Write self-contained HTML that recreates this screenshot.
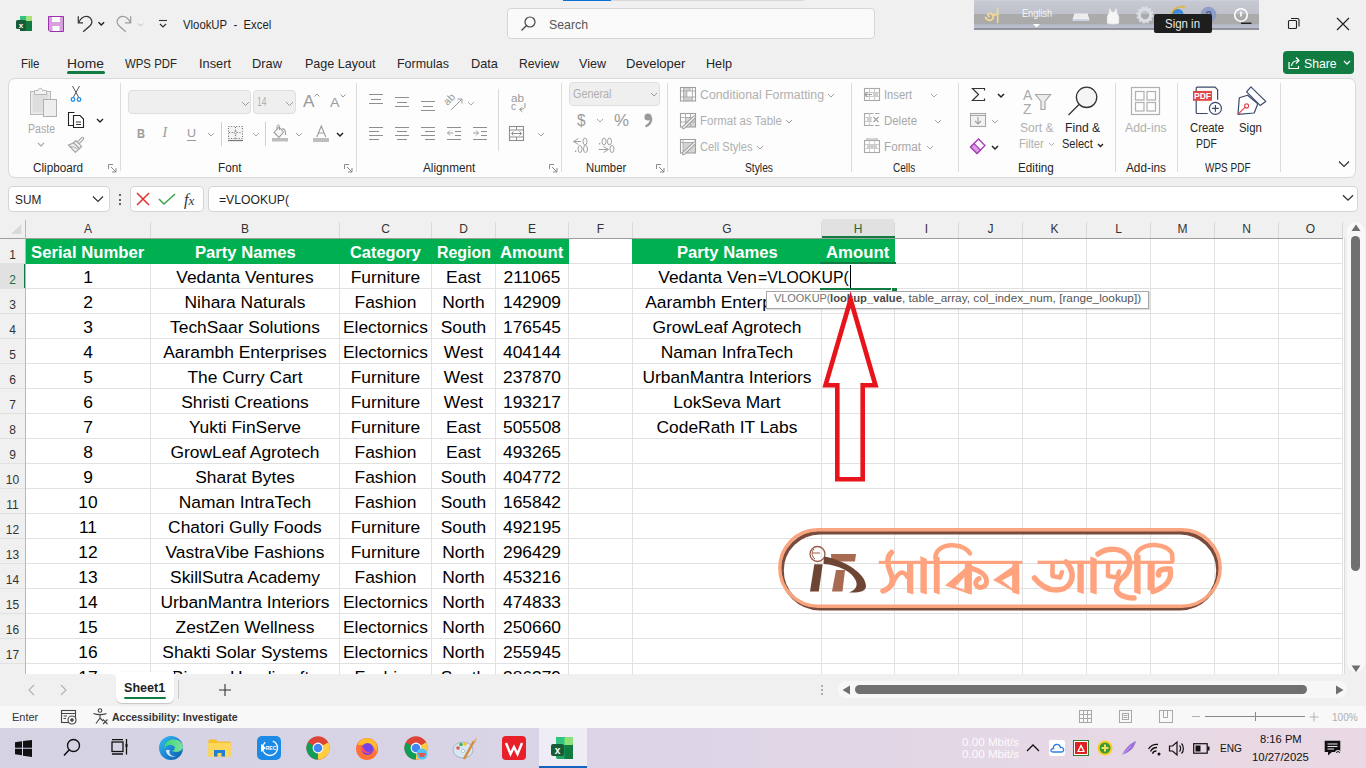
<!DOCTYPE html>
<html><head><meta charset="utf-8"><style>
html,body{margin:0;padding:0;}
body{width:1366px;height:768px;overflow:hidden;position:relative;background:#f0f0f0;font-family:"Liberation Sans",sans-serif;}
.t{position:absolute;white-space:nowrap;}
.r{position:absolute;}
.s{position:absolute;overflow:visible;}
</style></head><body>
<svg class="s" style="left:16px;top:15px;" width="16" height="17" viewBox="0 0 16 17">
<rect x="4" y="1" width="12" height="15" rx="1.5" fill="#21a366"/>
<rect x="4" y="1" width="6" height="5" fill="#33c481"/><rect x="10" y="1" width="6" height="5" rx="1" fill="#a8e37a"/>
<rect x="10" y="6" width="6" height="10" fill="#107c41"/><rect x="4" y="6" width="6" height="10" fill="#185c37"/>
<rect x="0" y="5" width="10" height="9" rx="1.5" fill="#185c37"/>
<text x="5" y="12.5" font-size="8" font-weight="bold" fill="#fff" text-anchor="middle" font-family="Liberation Sans">x</text></svg>
<svg class="s" style="left:48px;top:16px;" width="16" height="16" viewBox="0 0 16 16">
<path d="M0.5 0.5 H15.5 V15.5 H2 L0.5 14 Z" fill="#d9a0e0" stroke="#9b2fae" stroke-width="1"/>
<rect x="4" y="1" width="8" height="5" fill="#fff"/><rect x="4.5" y="10" width="7" height="5" fill="#fff"/></svg>
<svg class="s" style="left:77px;top:15px;" width="30" height="18" viewBox="0 0 30 18">
<path d="M1.3 1.2 V7.8 H6" fill="none" stroke="#333" stroke-width="1.2"/>
<path d="M1.6 7.6 C4 2.5 7 1.3 9.6 1.4 C13 1.5 15 4.5 14.9 7.2 C14.8 8.5 14 9.6 13.3 10.5 L6.2 16.8" fill="none" stroke="#333" stroke-width="1.25"/>
<path d="M21.5 7.2 L24.3 10 L27.1 7.2" fill="none" stroke="#222" stroke-width="1.4"/></svg>
<svg class="s" style="left:116px;top:15px;" width="30" height="18" viewBox="0 0 30 18">
<path d="M14.7 1.2 V7.8 H9" fill="none" stroke="#9a9a9a" stroke-width="1.2"/>
<path d="M14.4 7.6 C12 2.5 9 1.3 6.4 1.4 C3 1.5 1 4.5 1.1 7.2 C1.2 8.5 2 9.6 2.7 10.5 L9.8 16.8" fill="none" stroke="#9a9a9a" stroke-width="1.2"/>
<path d="M22 8.5 L24.5 11 L27 8.5" fill="none" stroke="#b8b8b8" stroke-width="1"/></svg>
<svg class="s" style="left:158px;top:19px;" width="10" height="10" viewBox="0 0 10 10"><path d="M1 1.5 H9" stroke="#333" stroke-width="1.1"/><path d="M2 5 L5 8 L8 5" fill="none" stroke="#333" stroke-width="1.2"/></svg>
<div class="t" style="left:183.00px;top:17px;font-size:12.5px;line-height:16px;color:#1f1f1f;transform:scaleX(0.9069);transform-origin:0 0;">VlookUP&nbsp; -&nbsp; Excel</div>
<div class="r" style="left:507px;top:8px;width:368px;height:31px;background:#fafafa;border:1px solid #d6d6d6;border-radius:4px;box-sizing:border-box;"></div>
<svg class="s" style="left:520px;top:16px;" width="16" height="16" viewBox="0 0 16 16"><circle cx="10" cy="6" r="5" fill="none" stroke="#444" stroke-width="1.2"/><path d="M6.5 9.5 L1.5 14.5" stroke="#444" stroke-width="1.3"/></svg>
<div class="t" style="left:549.00px;top:17px;font-size:13px;line-height:16px;color:#555;transform:scaleX(0.9468);transform-origin:0 0;">Search</div>
<div class="r" style="left:563px;top:0px;width:48px;height:1px;background:#0a70d6;"></div>
<div class="r" style="left:611px;top:0px;width:193px;height:1px;background:#d8d8d8;"></div>
<div class="r" style="left:974px;top:0px;width:285px;height:30px;background:linear-gradient(#d4d6dc 0%,#c6c9d1 4%,#bfc2ca 46%,#ababab 48%,#aaaaaa 80%,#b6b9c8 82%,#bcc0d0 93%,#8e9098 95%,#9a9ca4 100%);"></div>
<svg class="s" style="left:984px;top:7px;" width="16" height="17" viewBox="0 0 16 17"><path d="M1.5 10.5 C3 13.5 6 14 8 12.5 C10.5 10.5 9 6 5.5 6.5 C3.5 7 3.5 9 5 9.5" fill="none" stroke="#f2d894" stroke-width="1.8" stroke-linecap="round"/><path d="M8.5 8.5 C10 8 11.5 8 13 7 M13.5 1 C14 6 14 11 13.5 15.5" fill="none" stroke="#f2d894" stroke-width="1.6" stroke-linecap="round"/></svg>
<div class="t" style="left:1022.00px;top:6px;font-size:10.8px;line-height:14px;color:#f6f6f6;transform:scaleX(0.8469);transform-origin:0 0;">English</div>
<svg class="s" style="left:1033px;top:24px;" width="7" height="4" viewBox="0 0 7 4"><path d="M0 0 H7 L3.5 3.5Z" fill="#fff"/></svg>
<svg class="s" style="left:1072px;top:13px;" width="18" height="9" viewBox="0 0 18 9"><path d="M2.5 0.5 H15.5 L17.5 6.5 H0.5 Z" fill="#f2f2f2"/><path d="M3 2 H15 M2.5 4 H15.5" stroke="#cfcfcf" stroke-width="0.7" stroke-dasharray="1 1"/><rect x="0.5" y="6.5" width="17" height="1.5" fill="#c8d4e8"/></svg>
<svg class="s" style="left:1106px;top:8px;" width="14" height="17" viewBox="0 0 14 17"><path d="M3 0.5 V4 C3 6 1 7 1 9 V15.5 C4 16.5 10 16.5 13 15.5 V9 C13 7 11 6 11 4 V0.5 L9.5 0.5 C9.5 3 8 4 7 4 C6 4 4.5 3 4.5 0.5Z" fill="#f6f6f6" stroke="#d0d0d0" stroke-width="0.6"/></svg>
<svg class="s" style="left:1136px;top:6px;" width="18" height="18" viewBox="0 0 18 18"><circle cx="9" cy="9" r="5.8" fill="none" stroke="#d9dde4" stroke-width="3.2"/><circle cx="9" cy="9" r="7.6" fill="none" stroke="#d9dde4" stroke-width="2.2" stroke-dasharray="2.2 1.8"/></svg>
<svg class="s" style="left:1169px;top:5px;" width="18" height="18" viewBox="0 0 18 18"><path d="M3 13 C0 6 8 0 16 2 C10 0 3 4 4 11" fill="none" stroke="#e0b640" stroke-width="1.5"/><circle cx="9" cy="9.5" r="5.5" fill="#3d86d6"/><path d="M5.5 9.5 H12.5 M12 11.5 C11 13.5 7 14 6 11" fill="none" stroke="#cfe4f8" stroke-width="1.3"/></svg>
<svg class="s" style="left:1200px;top:6px;" width="17" height="17" viewBox="0 0 17 17"><circle cx="8.5" cy="8.5" r="7.8" fill="#8796c8" opacity="0.85"/><text x="8.5" y="13" font-size="11" font-weight="bold" fill="#4d5a86" text-anchor="middle" font-family="Liberation Sans">?</text></svg>
<svg class="s" style="left:1233px;top:7px;" width="20" height="18" viewBox="0 0 20 18"><circle cx="8" cy="8" r="6.3" fill="none" stroke="#fff" stroke-width="1.6"/><rect x="7.2" y="4.5" width="1.6" height="5" fill="#fff"/><rect x="8" y="15.6" width="10.5" height="1.3" fill="#111"/></svg>
<div class="r" style="left:1154px;top:14px;width:58px;height:19px;background:#1e1e1e;border-radius:2px;"></div>
<div class="t" style="left:1165.40px;top:17px;font-size:12px;line-height:15px;color:#e8e8e8;transform:scaleX(0.9539);transform-origin:0 0;">Sign in</div>
<svg class="s" style="left:1287px;top:17px;" width="14" height="14" viewBox="0 0 14 14"><rect x="1.5" y="3.5" width="8" height="8" rx="1" fill="none" stroke="#222" stroke-width="1.1"/><path d="M4 1.5 H10.5 A1.5 1.5 0 0 1 12 3 V9.5" fill="none" stroke="#222" stroke-width="1.1"/></svg>
<svg class="s" style="left:1336px;top:17px;" width="14" height="14" viewBox="0 0 14 14"><path d="M1 1 L13 13 M13 1 L1 13" stroke="#222" stroke-width="1.2"/></svg>
<div class="t" style="left:21.00px;top:56px;font-size:13.2px;line-height:16px;color:#262626;transform:scaleX(0.8697);transform-origin:0 0;">File</div>
<div class="t" style="left:67.00px;top:56px;font-size:13.2px;line-height:16px;color:#262626;transform:scaleX(1.0508);transform-origin:0 0;">Home</div>
<div class="t" style="left:125.00px;top:56px;font-size:13.2px;line-height:16px;color:#262626;transform:scaleX(0.8647);transform-origin:0 0;">WPS PDF</div>
<div class="t" style="left:199.00px;top:56px;font-size:13.2px;line-height:16px;color:#262626;transform:scaleX(0.9693);transform-origin:0 0;">Insert</div>
<div class="t" style="left:252.00px;top:56px;font-size:13.2px;line-height:16px;color:#262626;transform:scaleX(0.9739);transform-origin:0 0;">Draw</div>
<div class="t" style="left:304.50px;top:56px;font-size:13.2px;line-height:16px;color:#262626;transform:scaleX(0.9510);transform-origin:0 0;">Page Layout</div>
<div class="t" style="left:397.00px;top:56px;font-size:13.2px;line-height:16px;color:#262626;transform:scaleX(0.9452);transform-origin:0 0;">Formulas</div>
<div class="t" style="left:471.00px;top:56px;font-size:13.2px;line-height:16px;color:#262626;transform:scaleX(0.9683);transform-origin:0 0;">Data</div>
<div class="t" style="left:519.00px;top:56px;font-size:13.2px;line-height:16px;color:#262626;transform:scaleX(0.9242);transform-origin:0 0;">Review</div>
<div class="t" style="left:579.00px;top:56px;font-size:13.2px;line-height:16px;color:#262626;transform:scaleX(0.9516);transform-origin:0 0;">View</div>
<div class="t" style="left:626.00px;top:56px;font-size:13.2px;line-height:16px;color:#262626;transform:scaleX(0.9889);transform-origin:0 0;">Developer</div>
<div class="t" style="left:706.00px;top:56px;font-size:13.2px;line-height:16px;color:#262626;transform:scaleX(0.9577);transform-origin:0 0;">Help</div>
<div class="r" style="left:67px;top:71px;width:38px;height:3px;background:#107c41;border-radius:1.5px;"></div>
<div class="r" style="left:1283px;top:51px;width:71px;height:23px;background:#107c41;border-radius:4px;"></div>
<svg class="s" style="left:1286px;top:55px;" width="16" height="16" viewBox="0 0 16 16"><path d="M3 7 V13.5 H12.5 V11" fill="none" stroke="#fff" stroke-width="1.2"/><path d="M5.5 11 C6 7 8.5 5.5 12.5 5.5 M10 2.5 L13 5.5 L10 8.5" fill="none" stroke="#fff" stroke-width="1.2"/></svg>
<div class="t" style="left:1304.00px;top:56px;font-size:13.2px;line-height:16px;color:#fff;transform:scaleX(0.9283);transform-origin:0 0;">Share</div>
<svg class="s" style="left:1342.5px;top:60px;" width="8" height="6" viewBox="0 0 8 6"><path d="M1 1 L4 4 L7 1" fill="none" stroke="#fff" stroke-width="1.3"/></svg>
<div class="r" style="left:8px;top:78px;width:1348px;height:100px;background:#fdfdfd;border:1px solid #d9d9d9;border-radius:7px;box-sizing:border-box;"></div>
<div class="t" style="left:32.50px;top:161px;font-size:12px;line-height:15px;color:#262626;transform:scaleX(0.9754);transform-origin:0 0;">Clipboard</div>
<div class="t" style="left:217.50px;top:161px;font-size:12px;line-height:15px;color:#262626;transform:scaleX(0.9787);transform-origin:0 0;">Font</div>
<div class="t" style="left:423.40px;top:161px;font-size:12px;line-height:15px;color:#262626;transform:scaleX(0.9801);transform-origin:0 0;">Alignment</div>
<div class="t" style="left:585.60px;top:161px;font-size:12px;line-height:15px;color:#262626;transform:scaleX(0.9419);transform-origin:0 0;">Number</div>
<div class="t" style="left:745.00px;top:161px;font-size:12px;line-height:15px;color:#262626;transform:scaleX(0.8568);transform-origin:0 0;">Styles</div>
<div class="t" style="left:892.70px;top:161px;font-size:12px;line-height:15px;color:#262626;transform:scaleX(0.8361);transform-origin:0 0;">Cells</div>
<div class="t" style="left:1017.60px;top:161px;font-size:12px;line-height:15px;color:#262626;transform:scaleX(0.9757);transform-origin:0 0;">Editing</div>
<div class="t" style="left:1125.80px;top:161px;font-size:12px;line-height:15px;color:#262626;transform:scaleX(0.9831);transform-origin:0 0;">Add-ins</div>
<div class="t" style="left:1205.00px;top:161px;font-size:12px;line-height:15px;color:#262626;transform:scaleX(0.8323);transform-origin:0 0;">WPS PDF</div>
<div class="r" style="left:119.5px;top:83px;width:1px;height:88px;background:#dcdcdc;"></div>
<div class="r" style="left:355.5px;top:83px;width:1px;height:89px;background:#dcdcdc;"></div>
<div class="r" style="left:560.5px;top:83px;width:1px;height:89px;background:#dcdcdc;"></div>
<div class="r" style="left:667.3px;top:83px;width:1px;height:89px;background:#dcdcdc;"></div>
<div class="r" style="left:851px;top:83px;width:1px;height:89px;background:#dcdcdc;"></div>
<div class="r" style="left:957.7px;top:83px;width:1px;height:89px;background:#dcdcdc;"></div>
<div class="r" style="left:1114.5px;top:83px;width:1px;height:89px;background:#dcdcdc;"></div>
<div class="r" style="left:1177px;top:83px;width:1px;height:89px;background:#dcdcdc;"></div>
<div class="r" style="left:1279.5px;top:83px;width:1px;height:89px;background:#dcdcdc;"></div>
<svg class="s" style="left:108px;top:164px;" width="9" height="9" viewBox="0 0 9 9"><path d="M0.5 0.5 H5 M0.5 0.5 V5 M3 3 L8 8 M8 4 V8 H4" fill="none" stroke="#8a8a8a" stroke-width="1"/></svg>
<svg class="s" style="left:344px;top:164px;" width="9" height="9" viewBox="0 0 9 9"><path d="M0.5 0.5 H5 M0.5 0.5 V5 M3 3 L8 8 M8 4 V8 H4" fill="none" stroke="#8a8a8a" stroke-width="1"/></svg>
<svg class="s" style="left:549px;top:164px;" width="9" height="9" viewBox="0 0 9 9"><path d="M0.5 0.5 H5 M0.5 0.5 V5 M3 3 L8 8 M8 4 V8 H4" fill="none" stroke="#8a8a8a" stroke-width="1"/></svg>
<svg class="s" style="left:656px;top:164px;" width="9" height="9" viewBox="0 0 9 9"><path d="M0.5 0.5 H5 M0.5 0.5 V5 M3 3 L8 8 M8 4 V8 H4" fill="none" stroke="#8a8a8a" stroke-width="1"/></svg>
<svg class="s" style="left:29px;top:86px;" width="30" height="32" viewBox="0 0 30 32">
<rect x="1.5" y="5.5" width="20" height="23" fill="#ececec" stroke="#b8b8b8" stroke-width="1"/>
<rect x="3.5" y="7.5" width="16" height="19" fill="#dedede"/>
<path d="M5.5 8.5 V4.5 H9 C9 1.5 13.5 1.5 13.5 4.5 H17.5 V8.5 Z" fill="#f2f2f2" stroke="#b8b8b8" stroke-width="1"/>
<rect x="14.5" y="13.5" width="13" height="17" fill="#eeeeee" stroke="#b0b0b0" stroke-width="1"/></svg>
<div class="t" style="left:27.80px;top:122px;font-size:12px;line-height:15px;color:#a8a8a8;transform:scaleX(0.8799);transform-origin:0 0;">Paste</div>
<svg class="s" style="left:37px;top:142px;" width="8" height="5.0" viewBox="0 0 8 5.0"><path d="M1 1 L4.0 4.0 L7 1" fill="none" stroke="#a8a8a8" stroke-width="1.1"/></svg>
<svg class="s" style="left:70px;top:85px;" width="12" height="18" viewBox="0 0 12 18">
<path d="M2.5 1 L8.5 12 M9.5 1 L3.5 12" stroke="#555" stroke-width="1"/>
<circle cx="3" cy="14.5" r="1.8" fill="none" stroke="#1e8fe0" stroke-width="1.3"/>
<circle cx="9" cy="14.5" r="1.8" fill="none" stroke="#1e8fe0" stroke-width="1.3"/></svg>
<svg class="s" style="left:67px;top:111px;" width="18" height="18" viewBox="0 0 18 18">
<path d="M7.5 1.5 H1.5 V14.5 H6" fill="none" stroke="#222" stroke-width="1.1"/>
<path d="M6.5 4.5 H13 L16.5 8 V16.5 H6.5 Z" fill="#fff" stroke="#222" stroke-width="1.1"/>
<path d="M9 11 H14 M9 13.5 H14" stroke="#333" stroke-width="1"/></svg>
<svg class="s" style="left:95.5px;top:118px;" width="8" height="5.0" viewBox="0 0 8 5.0"><path d="M1 1 L4.0 4.0 L7 1" fill="none" stroke="#222" stroke-width="1.4"/></svg>
<svg class="s" style="left:67px;top:136px;" width="18" height="18" viewBox="0 0 18 18">
<path d="M15.5 2.5 L11.5 6.5" stroke="#a0a0a0" stroke-width="3.4" stroke-linecap="round"/>
<path d="M15.5 2.5 L11.5 6.5" stroke="#fafafa" stroke-width="1.2" stroke-linecap="round"/>
<path d="M8.8 4.6 L14.6 10.4 L12.4 12.6 L6.6 6.8 Z" fill="#f4f4f4" stroke="#a0a0a0" stroke-width="1.1"/>
<path d="M6.6 6.8 C4.5 8 2.5 8.5 1.3 8.9 L8.3 16.3 L12.4 12.6 Z" fill="#ededed" stroke="#a0a0a0" stroke-width="1.1" stroke-linejoin="round"/>
<path d="M3 10.5 C6 10.5 9 11.5 11 13.5" fill="none" stroke="#a8a8a8" stroke-width="0.9"/></svg>
<div class="r" style="left:128px;top:90px;width:123px;height:24px;background:#efefef;border:1px solid #dfdfdf;border-radius:4px;box-sizing:border-box;"></div>
<svg class="s" style="left:240.5px;top:101px;" width="9" height="5.5" viewBox="0 0 9 5.5"><path d="M1 1 L4.5 4.5 L8 1" fill="none" stroke="#9a9a9a" stroke-width="1"/></svg>
<div class="r" style="left:253px;top:90px;width:43px;height:24px;background:#efefef;border:1px solid #dfdfdf;border-radius:4px;box-sizing:border-box;"></div>
<div class="t" style="left:256.70px;top:94px;font-size:12.5px;line-height:16px;color:#b0b0b0;transform:scaleX(0.6832);transform-origin:0 0;">14</div>
<svg class="s" style="left:284.5px;top:101px;" width="9" height="5.5" viewBox="0 0 9 5.5"><path d="M1 1 L4.5 4.5 L8 1" fill="none" stroke="#9a9a9a" stroke-width="1"/></svg>
<div class="t" style="left:302.50px;top:91px;font-size:16.5px;line-height:21px;color:#9a9a9a;transform:scaleX(1.0449);transform-origin:0 0;">A</div>
<svg class="s" style="left:314px;top:93px;" width="6" height="4" viewBox="0 0 6 4"><path d="M0.5 3.5 L3 1 L5.5 3.5" fill="none" stroke="#9a9a9a" stroke-width="1"/></svg>
<div class="t" style="left:330.00px;top:94px;font-size:13.5px;line-height:17px;color:#9a9a9a;transform:scaleX(1.0550);transform-origin:0 0;">A</div>
<svg class="s" style="left:339.5px;top:94px;" width="6" height="4" viewBox="0 0 6 4"><path d="M0.5 0.5 L3 3 L5.5 0.5" fill="none" stroke="#9a9a9a" stroke-width="1"/></svg>
<div class="t" style="left:136.50px;top:126px;font-size:13px;line-height:16px;color:#9a9a9a;font-weight:bold;transform:scaleX(0.8521);transform-origin:0 0;">B</div>
<div class="t" style="left:162.50px;top:124px;font-size:14px;line-height:18px;color:#9a9a9a;font-family:&quot;Liberation Serif&quot;,serif;font-style:italic;">I</div>
<div class="t" style="left:187.00px;top:126px;font-size:11.6px;line-height:14px;color:#9a9a9a;transform:scaleX(1.0743);transform-origin:0 0;">U</div>
<div class="r" style="left:187px;top:139.5px;width:9px;height:1px;background:#9a9a9a;"></div>
<svg class="s" style="left:206.5px;top:132px;" width="8" height="5.0" viewBox="0 0 8 5.0"><path d="M1 1 L4.0 4.0 L7 1" fill="none" stroke="#a8a8a8" stroke-width="1"/></svg>
<div class="r" style="left:221px;top:122px;width:1px;height:24px;background:#d0d0d0;"></div>
<svg class="s" style="left:227px;top:125px;" width="17" height="18" viewBox="0 0 17 18">
<rect x="1.5" y="1.5" width="14" height="12" fill="#f4f4f4" stroke="#7a7a7a" stroke-width="1.1" stroke-dasharray="1.1 1.5"/>
<path d="M8.5 2 V13.5 M2 7.5 H15" stroke="#7a7a7a" stroke-width="1.1" stroke-dasharray="1.1 1.5"/>
<path d="M8.5 6 L10 7.5 L8.5 9 L7 7.5Z" fill="#fff" stroke="#7a7a7a" stroke-width="0.8"/>
<path d="M1 15.5 H16" stroke="#7a7a7a" stroke-width="1.3"/></svg>
<svg class="s" style="left:251.5px;top:132px;" width="8" height="5.0" viewBox="0 0 8 5.0"><path d="M1 1 L4.0 4.0 L7 1" fill="none" stroke="#a8a8a8" stroke-width="1"/></svg>
<div class="r" style="left:265px;top:122px;width:1px;height:24px;background:#d0d0d0;"></div>
<svg class="s" style="left:271px;top:124px;" width="18" height="19" viewBox="0 0 18 19">
<path d="M3 8.5 L8 3 L12.5 8 L8 13.5 Z" fill="#f6f6f6" stroke="#9a9a9a" stroke-width="1.1"/>
<path d="M6 5.5 V2.5 C6 0.5 8.5 0.5 8.5 2.5 V6" fill="none" stroke="#9a9a9a" stroke-width="1"/>
<path d="M11 5 C13 4.5 14.5 6 14.5 8.5 V11" fill="none" stroke="#9a9a9a" stroke-width="1.1"/>
<rect x="1" y="14" width="16" height="3.5" fill="#bdbdbd"/></svg>
<svg class="s" style="left:295px;top:132px;" width="8" height="5.0" viewBox="0 0 8 5.0"><path d="M1 1 L4.0 4.0 L7 1" fill="none" stroke="#a8a8a8" stroke-width="1"/></svg>
<svg class="s" style="left:313px;top:125px;" width="16" height="13" viewBox="0 0 16 13"><path d="M3.8 12 L8.3 1 L12.8 12 M5.4 8 H11.2" fill="none" stroke="#9a9a9a" stroke-width="1.1"/></svg>
<div class="r" style="left:313px;top:138px;width:16px;height:3.5px;background:#bdbdbd;"></div>
<svg class="s" style="left:336px;top:132px;" width="8" height="5.0" viewBox="0 0 8 5.0"><path d="M1 1 L4.0 4.0 L7 1" fill="none" stroke="#222" stroke-width="1.5"/></svg>
<div class="r" style="left:369px;top:94px;width:14px;height:1.2px;background:#8f8f8f;"></div>
<div class="r" style="left:371px;top:98.5px;width:10px;height:1.2px;background:#8f8f8f;"></div>
<div class="r" style="left:369px;top:103px;width:14px;height:1.2px;background:#8f8f8f;"></div>
<div class="r" style="left:395px;top:97px;width:14px;height:1.2px;background:#8f8f8f;"></div>
<div class="r" style="left:397px;top:101.5px;width:10px;height:1.2px;background:#8f8f8f;"></div>
<div class="r" style="left:395px;top:106px;width:14px;height:1.2px;background:#8f8f8f;"></div>
<div class="r" style="left:421px;top:101px;width:14px;height:1.2px;background:#8f8f8f;"></div>
<div class="r" style="left:423px;top:105.5px;width:10px;height:1.2px;background:#8f8f8f;"></div>
<div class="r" style="left:421px;top:110px;width:14px;height:1.2px;background:#8f8f8f;"></div>
<svg class="s" style="left:445px;top:92px;" width="28" height="18" viewBox="0 0 28 18">
<text x="0" y="0" font-size="10.5" fill="#9a9a9a" font-family="Liberation Sans" transform="translate(2.5,14) rotate(-45)">ab</text>
<path d="M6 18 L16.5 7.5 M12.5 7 H17 V11.5" fill="none" stroke="#999" stroke-width="1"/></svg>
<svg class="s" style="left:467px;top:101px;" width="8" height="5.0" viewBox="0 0 8 5.0"><path d="M1 1 L4.0 4.0 L7 1" fill="none" stroke="#a8a8a8" stroke-width="1"/></svg>
<div class="r" style="left:498px;top:89px;width:1px;height:62px;background:#d9d9d9;"></div>
<div class="t" style="left:511.00px;top:93px;font-size:10px;line-height:12px;color:#9a9a9a;transform:scaleX(1.1687);transform-origin:0 0;">ab</div>
<div class="t" style="left:511.00px;top:101px;font-size:10px;line-height:12px;color:#9a9a9a;">c</div>
<svg class="s" style="left:516px;top:102px;" width="12" height="10" viewBox="0 0 12 10"><path d="M9 1 V4 C9 6.5 7 7.5 4 7.5 M6.5 5 L3.5 7.5 L6.5 10" fill="none" stroke="#9a9a9a" stroke-width="1"/></svg>
<div class="r" style="left:369px;top:127px;width:14px;height:1.2px;background:#8f8f8f;"></div>
<div class="r" style="left:369px;top:131px;width:10px;height:1.2px;background:#8f8f8f;"></div>
<div class="r" style="left:369px;top:135px;width:14px;height:1.2px;background:#8f8f8f;"></div>
<div class="r" style="left:369px;top:139px;width:10px;height:1.2px;background:#8f8f8f;"></div>
<div class="r" style="left:395px;top:127px;width:14px;height:1.2px;background:#8f8f8f;"></div>
<div class="r" style="left:397px;top:131px;width:10px;height:1.2px;background:#8f8f8f;"></div>
<div class="r" style="left:395px;top:135px;width:14px;height:1.2px;background:#8f8f8f;"></div>
<div class="r" style="left:397px;top:139px;width:10px;height:1.2px;background:#8f8f8f;"></div>
<div class="r" style="left:421px;top:127px;width:14px;height:1.2px;background:#8f8f8f;"></div>
<div class="r" style="left:425px;top:131px;width:10px;height:1.2px;background:#8f8f8f;"></div>
<div class="r" style="left:421px;top:135px;width:14px;height:1.2px;background:#8f8f8f;"></div>
<div class="r" style="left:425px;top:139px;width:10px;height:1.2px;background:#8f8f8f;"></div>
<div class="r" style="left:447px;top:127px;width:14px;height:1.2px;background:#8f8f8f;"></div>
<div class="r" style="left:455px;top:131px;width:6px;height:1.2px;background:#8f8f8f;"></div>
<div class="r" style="left:455px;top:135px;width:6px;height:1.2px;background:#8f8f8f;"></div>
<div class="r" style="left:447px;top:139px;width:14px;height:1.2px;background:#8f8f8f;"></div>
<svg class="s" style="left:446px;top:129px;" width="8" height="8" viewBox="0 0 8 8"><path d="M7 4 H1.5 M4 1.5 L1.5 4 L4 6.5" fill="none" stroke="#a0a0a0" stroke-width="1"/></svg>
<div class="r" style="left:473px;top:127px;width:14px;height:1.2px;background:#8f8f8f;"></div>
<div class="r" style="left:481px;top:131px;width:6px;height:1.2px;background:#8f8f8f;"></div>
<div class="r" style="left:481px;top:135px;width:6px;height:1.2px;background:#8f8f8f;"></div>
<div class="r" style="left:473px;top:139px;width:14px;height:1.2px;background:#8f8f8f;"></div>
<svg class="s" style="left:472px;top:129px;" width="8" height="8" viewBox="0 0 8 8"><path d="M1 4 H6.5 M4 1.5 L6.5 4 L4 6.5" fill="none" stroke="#a0a0a0" stroke-width="1"/></svg>
<svg class="s" style="left:508px;top:125px;" width="17" height="17" viewBox="0 0 17 17">
<rect x="1.5" y="1.5" width="14" height="14" fill="none" stroke="#8f8f8f" stroke-width="1.1"/>
<path d="M1.5 5 H15.5 M1.5 12 H15.5 M8.5 1.5 V5 M8.5 12 V15.5" stroke="#8f8f8f" stroke-width="1"/>
<path d="M3.5 8.5 H13.5 M5.5 6.5 L3.5 8.5 L5.5 10.5 M11.5 6.5 L13.5 8.5 L11.5 10.5" fill="none" stroke="#8f8f8f" stroke-width="1"/></svg>
<svg class="s" style="left:537px;top:132px;" width="8" height="5.0" viewBox="0 0 8 5.0"><path d="M1 1 L4.0 4.0 L7 1" fill="none" stroke="#a8a8a8" stroke-width="1"/></svg>
<div class="r" style="left:569px;top:82px;width:91px;height:24px;background:#efefef;border:1px solid #dfdfdf;border-radius:4px;box-sizing:border-box;"></div>
<div class="t" style="left:572.70px;top:87px;font-size:12px;line-height:15px;color:#b0b0b0;transform:scaleX(0.9018);transform-origin:0 0;">General</div>
<svg class="s" style="left:650px;top:92px;" width="8" height="5.0" viewBox="0 0 8 5.0"><path d="M1 1 L4.0 4.0 L7 1" fill="none" stroke="#9a9a9a" stroke-width="1"/></svg>
<div class="t" style="left:576.50px;top:111px;font-size:16px;line-height:20px;color:#9a9a9a;transform:scaleX(0.9552);transform-origin:0 0;">$</div>
<svg class="s" style="left:596px;top:117.5px;" width="8" height="5.0" viewBox="0 0 8 5.0"><path d="M1 1 L4.0 4.0 L7 1" fill="none" stroke="#a8a8a8" stroke-width="1"/></svg>
<div class="t" style="left:614.00px;top:111px;font-size:16px;line-height:20px;color:#9a9a9a;transform:scaleX(1.0544);transform-origin:0 0;">%</div>
<svg class="s" style="left:643px;top:112px;" width="10" height="16" viewBox="0 0 10 16"><circle cx="5" cy="5" r="3.6" fill="#9a9a9a"/><path d="M8.2 5.5 C8.5 10 6 13 2.5 14.5" fill="none" stroke="#9a9a9a" stroke-width="2.2"/></svg>
<svg class="s" style="left:572px;top:136px;" width="44" height="19" viewBox="0 0 44 19">
<path d="M6.5 2.5 L1.5 5.5 L6.5 8.5 M1.5 5.5 H9" fill="none" stroke="#a0a0a0" stroke-width="1"/>
<ellipse cx="13" cy="5.5" rx="2" ry="3.5" fill="none" stroke="#a0a0a0" stroke-width="1"/>
<rect x="3" y="14.5" width="1.3" height="1.5" fill="#a0a0a0"/><ellipse cx="8" cy="13" rx="2" ry="3.5" fill="none" stroke="#a0a0a0" stroke-width="1"/><ellipse cx="13.5" cy="13" rx="2" ry="3.5" fill="none" stroke="#a0a0a0" stroke-width="1"/>
<rect x="27" y="7" width="1.3" height="1.5" fill="#a0a0a0"/><ellipse cx="32" cy="5.5" rx="2" ry="3.5" fill="none" stroke="#a0a0a0" stroke-width="1"/><ellipse cx="37.5" cy="5.5" rx="2" ry="3.5" fill="none" stroke="#a0a0a0" stroke-width="1"/>
<path d="M31.5 10.5 L36.5 13.5 L31.5 16.5 M26.5 13.5 H36" fill="none" stroke="#a0a0a0" stroke-width="1"/>
<ellipse cx="40" cy="13" rx="2" ry="3.5" fill="none" stroke="#a0a0a0" stroke-width="1"/></svg>
<svg class="s" style="left:679px;top:86px;" width="18" height="17" viewBox="0 0 18 17"><rect x="4.5" y="1.5" width="6.5" height="3.5" fill="#cfcfcf"/><rect x="4.5" y="5" width="3.3" height="6" fill="#cfcfcf"/><rect x="4.5" y="11" width="8.9" height="4" fill="#cfcfcf"/>
<rect x="1.5" y="1.5" width="15" height="13.5" fill="none" stroke="#9f9f9f" stroke-width="1.1"/>
<path d="M1.5 5 H16.5 M1.5 11 H16.5 M4.5 1.5 V15 M13.4 1.5 V15 M7.8 5 V11 M11 1.5 V5" stroke="#a8a8a8" stroke-width="0.9"/></svg>
<div class="t" style="left:700.00px;top:88px;font-size:12px;line-height:15px;color:#b0b0b0;transform:scaleX(1.0271);transform-origin:0 0;">Conditional Formatting</div>
<svg class="s" style="left:827px;top:92.5px;" width="8" height="5.0" viewBox="0 0 8 5.0"><path d="M1 1 L4.0 4.0 L7 1" fill="none" stroke="#a0a0a0" stroke-width="1"/></svg>
<svg class="s" style="left:679px;top:112px;" width="19" height="18" viewBox="0 0 19 18"><rect x="6.5" y="5.5" width="10" height="9.5" fill="#d4d4d4"/>
<rect x="1.5" y="1.5" width="15" height="13.5" fill="none" stroke="#9f9f9f" stroke-width="1.1"/>
<path d="M1.5 5.5 H16.5 M1.5 10 H16.5 M6.5 1.5 V15 M11.5 1.5 V15" stroke="#a8a8a8" stroke-width="0.9"/>
<path d="M4.5 15.5 L15.5 5" stroke="#9f9f9f" stroke-width="3.4" stroke-linecap="round"/><path d="M4.5 15.5 L15.5 5" stroke="#f2f2f2" stroke-width="1.4" stroke-linecap="round"/></svg>
<div class="t" style="left:700.00px;top:114px;font-size:12px;line-height:15px;color:#b0b0b0;transform:scaleX(0.9555);transform-origin:0 0;">Format as Table</div>
<svg class="s" style="left:785px;top:118.5px;" width="8" height="5.0" viewBox="0 0 8 5.0"><path d="M1 1 L4.0 4.0 L7 1" fill="none" stroke="#a0a0a0" stroke-width="1"/></svg>
<svg class="s" style="left:679px;top:138px;" width="19" height="18" viewBox="0 0 19 18"><rect x="4" y="4.5" width="12.5" height="10.5" fill="#d4d4d4"/>
<rect x="1.5" y="1.5" width="15" height="13.5" fill="none" stroke="#9f9f9f" stroke-width="1.1"/>
<path d="M1.5 4.5 H16.5 M4 1.5 V15" stroke="#a8a8a8" stroke-width="0.9"/>
<path d="M4.5 15.5 L15.5 5" stroke="#9f9f9f" stroke-width="3.4" stroke-linecap="round"/><path d="M4.5 15.5 L15.5 5" stroke="#f2f2f2" stroke-width="1.4" stroke-linecap="round"/></svg>
<div class="t" style="left:700.00px;top:140px;font-size:12px;line-height:15px;color:#b0b0b0;transform:scaleX(0.9262);transform-origin:0 0;">Cell Styles</div>
<svg class="s" style="left:756px;top:144.5px;" width="8" height="5.0" viewBox="0 0 8 5.0"><path d="M1 1 L4.0 4.0 L7 1" fill="none" stroke="#a0a0a0" stroke-width="1"/></svg>
<svg class="s" style="left:863px;top:87px;" width="18" height="15" viewBox="0 0 18 15"><rect x="1.5" y="1.5" width="15" height="12" fill="#fff" stroke="#a8a8a8" stroke-width="1.1"/>
<path d="M1.5 5.5 H16.5 M1.5 9.5 H16.5 M6.5 1.5 V13.5 M11.5 1.5 V13.5" stroke="#c4c4c4" stroke-width="0.9"/><rect x="10" y="5" width="5" height="5" fill="#cfcfcf"/>
<path d="M2 7.5 H9 M4.5 5 L2 7.5 L4.5 10" fill="none" stroke="#a0a0a0" stroke-width="1.1"/></svg>
<div class="t" style="left:884.00px;top:88px;font-size:12px;line-height:15px;color:#a8a8a8;transform:scaleX(0.9330);transform-origin:0 0;">Insert</div>
<svg class="s" style="left:930px;top:92.5px;" width="8" height="5.0" viewBox="0 0 8 5.0"><path d="M1 1 L4.0 4.0 L7 1" fill="none" stroke="#a8a8a8" stroke-width="1"/></svg>
<svg class="s" style="left:863px;top:112px;" width="18" height="15" viewBox="0 0 18 15"><path d="M10.5 1.5 H1.5 V13.5 H10.5 M16.5 1.5 H12 M16.5 13.5 H12" fill="none" stroke="#a8a8a8" stroke-width="1.1"/>
<path d="M1.5 5.5 H9 M1.5 9.5 H9 M6.5 1.5 V13.5" stroke="#c4c4c4" stroke-width="0.9"/><rect x="4" y="5" width="4.5" height="5" fill="#cfcfcf"/>
<path d="M10.5 5 L15.5 10 M15.5 5 L10.5 10" stroke="#a0a0a0" stroke-width="1.1"/></svg>
<div class="t" style="left:884.00px;top:114px;font-size:12px;line-height:15px;color:#a8a8a8;transform:scaleX(0.9513);transform-origin:0 0;">Delete</div>
<svg class="s" style="left:934px;top:118.5px;" width="8" height="5.0" viewBox="0 0 8 5.0"><path d="M1 1 L4.0 4.0 L7 1" fill="none" stroke="#a8a8a8" stroke-width="1"/></svg>
<svg class="s" style="left:863px;top:137px;" width="18" height="17" viewBox="0 0 18 17"><rect x="1.5" y="3.5" width="15" height="12" fill="#fff" stroke="#a8a8a8" stroke-width="1.1"/>
<path d="M1.5 7.5 H16.5 M1.5 11.5 H16.5 M6.5 3.5 V15.5 M11.5 3.5 V15.5" stroke="#c4c4c4" stroke-width="0.9"/><rect x="4" y="7.5" width="10" height="4" fill="#cfcfcf"/>
<path d="M4 1 V3 M14 1 V3 M4 2 H14" stroke="#a8a8a8" stroke-width="0.9"/></svg>
<div class="t" style="left:884.00px;top:140px;font-size:12px;line-height:15px;color:#a8a8a8;transform:scaleX(0.9735);transform-origin:0 0;">Format</div>
<svg class="s" style="left:925.5px;top:144.5px;" width="8" height="5.0" viewBox="0 0 8 5.0"><path d="M1 1 L4.0 4.0 L7 1" fill="none" stroke="#a8a8a8" stroke-width="1"/></svg>
<svg class="s" style="left:971px;top:87px;" width="15" height="15" viewBox="0 0 15 15"><path d="M13.5 3.5 V1.5 H1.5 L7.5 7.5 L1.5 13.5 H13.5 V11.5" fill="none" stroke="#333" stroke-width="1.2"/></svg>
<svg class="s" style="left:997px;top:92.5px;" width="8" height="5.0" viewBox="0 0 8 5.0"><path d="M1 1 L4.0 4.0 L7 1" fill="none" stroke="#222" stroke-width="1.5"/></svg>
<svg class="s" style="left:991px;top:118.5px;" width="8" height="5.0" viewBox="0 0 8 5.0"><path d="M1 1 L4.0 4.0 L7 1" fill="none" stroke="#a8a8a8" stroke-width="1"/></svg>
<svg class="s" style="left:969px;top:137px;" width="18" height="18" viewBox="0 0 18 18"><path d="M1.5 10 L9.5 2 L16 8.5 L8 16.5 Z" fill="#f8f8f8" stroke="#a43bb5" stroke-width="1.3"/><path d="M1.5 10 L5 6.5 L11.5 13 L8 16.5 Z" fill="#dc9be6" stroke="#a43bb5" stroke-width="1.1"/></svg>
<svg class="s" style="left:969px;top:112px;" width="18" height="16" viewBox="0 0 18 16"><rect x="1.5" y="1.5" width="15" height="13" fill="#f2f2f2" stroke="#a8a8a8" stroke-width="1.1"/><path d="M1.5 3.5 H16.5" stroke="#a8a8a8"/><path d="M9 5 V12 M6 9 L9 12 L12 9" fill="none" stroke="#a0a0a0" stroke-width="1.1"/></svg>
<svg class="s" style="left:991px;top:144.5px;" width="8" height="5.0" viewBox="0 0 8 5.0"><path d="M1 1 L4.0 4.0 L7 1" fill="none" stroke="#222" stroke-width="1.5"/></svg>
<svg class="s" style="left:1021px;top:87px;" width="32" height="28" viewBox="0 0 32 28">
<text x="2" y="12.5" font-size="14" fill="#aaa" font-family="Liberation Sans">A</text>
<text x="2" y="26.5" font-size="14" fill="#aaa" font-family="Liberation Sans">Z</text>
<path d="M14.5 7.5 H29.5 L24 14.5 V22.5 H20 V14.5 Z" fill="#ececec" stroke="#a8a8a8" stroke-width="1.2"/></svg>
<div class="t" style="left:1020.00px;top:121px;font-size:12px;line-height:15px;color:#b0b0b0;transform:scaleX(1.0076);transform-origin:0 0;">Sort &amp;</div>
<div class="t" style="left:1019.00px;top:137px;font-size:12px;line-height:15px;color:#b0b0b0;transform:scaleX(0.9225);transform-origin:0 0;">Filter</div>
<svg class="s" style="left:1047.5px;top:142px;" width="7" height="4.5" viewBox="0 0 7 4.5"><path d="M1 1 L3.5 3.5 L6 1" fill="none" stroke="#b0b0b0" stroke-width="1"/></svg>
<svg class="s" style="left:1066px;top:85px;" width="34" height="32" viewBox="0 0 34 32"><circle cx="20.6" cy="12.3" r="10.2" fill="#f5f5f5" stroke="#333" stroke-width="1.3"/><path d="M13 19.5 L2.5 30" stroke="#333" stroke-width="1.3"/></svg>
<div class="t" style="left:1065.30px;top:121px;font-size:12px;line-height:15px;color:#262626;transform:scaleX(1.0149);transform-origin:0 0;">Find &amp;</div>
<div class="t" style="left:1062.00px;top:137px;font-size:12px;line-height:15px;color:#262626;transform:scaleX(0.9205);transform-origin:0 0;">Select</div>
<svg class="s" style="left:1096.5px;top:142.5px;" width="7" height="4.5" viewBox="0 0 7 4.5"><path d="M1 1 L3.5 3.5 L6 1" fill="none" stroke="#222" stroke-width="1.4"/></svg>
<svg class="s" style="left:1130px;top:86px;" width="31" height="30" viewBox="0 0 31 30"><rect x="1.5" y="1.5" width="28" height="27" fill="none" stroke="#b0b0b0" stroke-width="1.2"/>
<rect x="5.5" y="5.5" width="8.5" height="8.5" fill="none" stroke="#b0b0b0" stroke-width="1.2"/><rect x="17" y="5.5" width="8.5" height="8.5" fill="none" stroke="#b0b0b0" stroke-width="1.2"/>
<rect x="5.5" y="16.5" width="8.5" height="8.5" fill="none" stroke="#b0b0b0" stroke-width="1.2"/><rect x="17" y="16.5" width="8.5" height="8.5" fill="none" stroke="#b0b0b0" stroke-width="1.2"/></svg>
<div class="t" style="left:1125.00px;top:121px;font-size:12px;line-height:15px;color:#b0b0b0;transform:scaleX(1.0224);transform-origin:0 0;">Add-ins</div>
<svg class="s" style="left:1190px;top:86px;" width="34" height="31" viewBox="0 0 34 31">
<path d="M17.7 27.5 H7.2 Q6.2 27.5 6.2 26.5 V2.1 Q6.2 1.1 7.2 1.1 H25 L27.6 3.7 V13.7" fill="#fff" stroke="#3b4a6b" stroke-width="1.2"/>
<rect x="3" y="4.9" width="19" height="9.9" fill="#e04848"/>
<text x="12.5" y="13.3" font-size="8.6" font-weight="bold" fill="#fff" text-anchor="middle" font-family="Liberation Sans">PDF</text>
<circle cx="25.4" cy="22.4" r="6" fill="#fff" stroke="#3b4a6b" stroke-width="1.2"/><path d="M25.4 19 V25.8 M22 22.4 H28.8" stroke="#3b4a6b" stroke-width="1.2"/></svg>
<div class="t" style="left:1190.00px;top:121px;font-size:12px;line-height:15px;color:#262626;transform:scaleX(0.9440);transform-origin:0 0;">Create</div>
<div class="t" style="left:1195.70px;top:137px;font-size:12px;line-height:15px;color:#262626;transform:scaleX(0.8666);transform-origin:0 0;">PDF</div>
<svg class="s" style="left:1236px;top:85px;" width="32" height="31" viewBox="0 0 32 31">
<path d="M3.3 12.8 L11.6 10.2 L21.8 18.7 L18.2 28 L2 29.3 Z" fill="#fff" stroke="#3b4a6b" stroke-width="1.2" stroke-linejoin="round"/>
<path d="M14.9 1.9 L29.7 16.4 L24.1 20.4 L10.6 6.9 Z" fill="#fff" stroke="#3b4a6b" stroke-width="1.2" stroke-linejoin="round"/>
<path d="M2.2 29 L9.2 22.2" stroke="#e04848" stroke-width="1.1"/><circle cx="10.6" cy="20.9" r="2" fill="#fff" stroke="#e04848" stroke-width="1.1"/></svg>
<div class="t" style="left:1239.00px;top:121px;font-size:12px;line-height:15px;color:#262626;transform:scaleX(0.9493);transform-origin:0 0;">Sign</div>
<svg class="s" style="left:1338px;top:160px;" width="12" height="8" viewBox="0 0 12 8"><path d="M1 1.5 L6 6.5 L11 1.5" fill="none" stroke="#333" stroke-width="1.2"/></svg>
<div class="r" style="left:8px;top:186px;width:102px;height:26px;background:#fff;border:1px solid #d4d4d4;border-radius:4px;box-sizing:border-box;"></div>
<div class="t" style="left:15.00px;top:192px;font-size:13px;line-height:16px;color:#1f1f1f;transform:scaleX(0.9104);transform-origin:0 0;">SUM</div>
<svg class="s" style="left:92px;top:195px;" width="12" height="8" viewBox="0 0 12 8"><path d="M1 1.5 L6 6.5 L11 1.5" fill="none" stroke="#333" stroke-width="1.2"/></svg>
<div class="r" style="left:118.5px;top:194px;width:2.2px;height:2.2px;background:#333;border-radius:1px;"></div>
<div class="r" style="left:118.5px;top:198.5px;width:2.2px;height:2.2px;background:#333;border-radius:1px;"></div>
<div class="r" style="left:118.5px;top:203px;width:2.2px;height:2.2px;background:#333;border-radius:1px;"></div>
<div class="r" style="left:130px;top:186px;width:74px;height:26px;background:#fff;border:1px solid #d4d4d4;border-radius:4px;box-sizing:border-box;"></div>
<svg class="s" style="left:136px;top:192px;" width="14" height="14" viewBox="0 0 14 14"><path d="M1 1 L13 13 M13 1 L1 13" stroke="#e0322d" stroke-width="1.5"/></svg>
<svg class="s" style="left:158px;top:193px;" width="18" height="12" viewBox="0 0 18 12"><path d="M1 6 L6 11 L17 1" fill="none" stroke="#3aa54a" stroke-width="1.5"/></svg>
<div class="t" style="left:184.00px;top:190px;font-size:16px;line-height:20px;color:#333;font-family:&quot;Liberation Serif&quot;,serif;"><i>f</i><i style="font-size:13px">x</i></div>
<div class="r" style="left:208px;top:186px;width:1150px;height:26px;background:#fff;border:1px solid #d4d4d4;border-radius:4px;box-sizing:border-box;"></div>
<div class="t" style="left:219.00px;top:192px;font-size:13px;line-height:16px;color:#1f1f1f;transform:scaleX(0.9361);transform-origin:0 0;">=VLOOKUP(</div>
<svg class="s" style="left:1342px;top:194px;" width="13" height="8" viewBox="0 0 13 8"><path d="M1 1.2 L6 6.2 L11 1.2" fill="none" stroke="#333" stroke-width="1.3"/></svg>
<div class="r" style="left:0px;top:220px;width:1343px;height:454px;background:#fff;"></div>
<div class="r" style="left:0px;top:220px;width:1343px;height:18px;background:#f0f0f0;"></div>
<div class="r" style="left:0px;top:238px;width:25px;height:436px;background:#f0f0f0;"></div>
<div class="r" style="left:0px;top:238px;width:1343px;height:1px;background:#9f9f9f;"></div>
<div class="r" style="left:25px;top:220px;width:1px;height:454px;background:#b8b8b8;"></div>
<div class="r" style="left:150px;top:239px;width:1px;height:435px;background:#e1e1e1;"></div>
<div class="r" style="left:150px;top:222px;width:1px;height:16px;background:#d9d9d9;"></div>
<div class="r" style="left:339px;top:239px;width:1px;height:435px;background:#e1e1e1;"></div>
<div class="r" style="left:339px;top:222px;width:1px;height:16px;background:#d9d9d9;"></div>
<div class="r" style="left:431px;top:239px;width:1px;height:435px;background:#e1e1e1;"></div>
<div class="r" style="left:431px;top:222px;width:1px;height:16px;background:#d9d9d9;"></div>
<div class="r" style="left:495px;top:239px;width:1px;height:435px;background:#e1e1e1;"></div>
<div class="r" style="left:495px;top:222px;width:1px;height:16px;background:#d9d9d9;"></div>
<div class="r" style="left:568px;top:239px;width:1px;height:435px;background:#e1e1e1;"></div>
<div class="r" style="left:568px;top:222px;width:1px;height:16px;background:#d9d9d9;"></div>
<div class="r" style="left:632px;top:239px;width:1px;height:435px;background:#e1e1e1;"></div>
<div class="r" style="left:632px;top:222px;width:1px;height:16px;background:#d9d9d9;"></div>
<div class="r" style="left:821px;top:239px;width:1px;height:435px;background:#e1e1e1;"></div>
<div class="r" style="left:821px;top:222px;width:1px;height:16px;background:#d9d9d9;"></div>
<div class="r" style="left:894px;top:239px;width:1px;height:435px;background:#e1e1e1;"></div>
<div class="r" style="left:894px;top:222px;width:1px;height:16px;background:#d9d9d9;"></div>
<div class="r" style="left:958px;top:239px;width:1px;height:435px;background:#e1e1e1;"></div>
<div class="r" style="left:958px;top:222px;width:1px;height:16px;background:#d9d9d9;"></div>
<div class="r" style="left:1022px;top:239px;width:1px;height:435px;background:#e1e1e1;"></div>
<div class="r" style="left:1022px;top:222px;width:1px;height:16px;background:#d9d9d9;"></div>
<div class="r" style="left:1086px;top:239px;width:1px;height:435px;background:#e1e1e1;"></div>
<div class="r" style="left:1086px;top:222px;width:1px;height:16px;background:#d9d9d9;"></div>
<div class="r" style="left:1150px;top:239px;width:1px;height:435px;background:#e1e1e1;"></div>
<div class="r" style="left:1150px;top:222px;width:1px;height:16px;background:#d9d9d9;"></div>
<div class="r" style="left:1214px;top:239px;width:1px;height:435px;background:#e1e1e1;"></div>
<div class="r" style="left:1214px;top:222px;width:1px;height:16px;background:#d9d9d9;"></div>
<div class="r" style="left:1278px;top:239px;width:1px;height:435px;background:#e1e1e1;"></div>
<div class="r" style="left:1278px;top:222px;width:1px;height:16px;background:#d9d9d9;"></div>
<div class="r" style="left:1342px;top:239px;width:1px;height:435px;background:#e1e1e1;"></div>
<div class="r" style="left:1342px;top:222px;width:1px;height:16px;background:#d9d9d9;"></div>
<div class="r" style="left:26px;top:263px;width:1317px;height:1px;background:#e1e1e1;"></div>
<div class="r" style="left:0px;top:263px;width:25px;height:1px;background:#e1e1e1;"></div>
<div class="r" style="left:26px;top:288px;width:1317px;height:1px;background:#e1e1e1;"></div>
<div class="r" style="left:0px;top:288px;width:25px;height:1px;background:#e1e1e1;"></div>
<div class="r" style="left:26px;top:313px;width:1317px;height:1px;background:#e1e1e1;"></div>
<div class="r" style="left:0px;top:313px;width:25px;height:1px;background:#e1e1e1;"></div>
<div class="r" style="left:26px;top:338px;width:1317px;height:1px;background:#e1e1e1;"></div>
<div class="r" style="left:0px;top:338px;width:25px;height:1px;background:#e1e1e1;"></div>
<div class="r" style="left:26px;top:363px;width:1317px;height:1px;background:#e1e1e1;"></div>
<div class="r" style="left:0px;top:363px;width:25px;height:1px;background:#e1e1e1;"></div>
<div class="r" style="left:26px;top:388px;width:1317px;height:1px;background:#e1e1e1;"></div>
<div class="r" style="left:0px;top:388px;width:25px;height:1px;background:#e1e1e1;"></div>
<div class="r" style="left:26px;top:413px;width:1317px;height:1px;background:#e1e1e1;"></div>
<div class="r" style="left:0px;top:413px;width:25px;height:1px;background:#e1e1e1;"></div>
<div class="r" style="left:26px;top:438px;width:1317px;height:1px;background:#e1e1e1;"></div>
<div class="r" style="left:0px;top:438px;width:25px;height:1px;background:#e1e1e1;"></div>
<div class="r" style="left:26px;top:463px;width:1317px;height:1px;background:#e1e1e1;"></div>
<div class="r" style="left:0px;top:463px;width:25px;height:1px;background:#e1e1e1;"></div>
<div class="r" style="left:26px;top:488px;width:1317px;height:1px;background:#e1e1e1;"></div>
<div class="r" style="left:0px;top:488px;width:25px;height:1px;background:#e1e1e1;"></div>
<div class="r" style="left:26px;top:513px;width:1317px;height:1px;background:#e1e1e1;"></div>
<div class="r" style="left:0px;top:513px;width:25px;height:1px;background:#e1e1e1;"></div>
<div class="r" style="left:26px;top:538px;width:1317px;height:1px;background:#e1e1e1;"></div>
<div class="r" style="left:0px;top:538px;width:25px;height:1px;background:#e1e1e1;"></div>
<div class="r" style="left:26px;top:563px;width:1317px;height:1px;background:#e1e1e1;"></div>
<div class="r" style="left:0px;top:563px;width:25px;height:1px;background:#e1e1e1;"></div>
<div class="r" style="left:26px;top:588px;width:1317px;height:1px;background:#e1e1e1;"></div>
<div class="r" style="left:0px;top:588px;width:25px;height:1px;background:#e1e1e1;"></div>
<div class="r" style="left:26px;top:613px;width:1317px;height:1px;background:#e1e1e1;"></div>
<div class="r" style="left:0px;top:613px;width:25px;height:1px;background:#e1e1e1;"></div>
<div class="r" style="left:26px;top:638px;width:1317px;height:1px;background:#e1e1e1;"></div>
<div class="r" style="left:0px;top:638px;width:25px;height:1px;background:#e1e1e1;"></div>
<div class="r" style="left:26px;top:663px;width:1317px;height:1px;background:#e1e1e1;"></div>
<div class="r" style="left:0px;top:663px;width:25px;height:1px;background:#e1e1e1;"></div>
<div class="r" style="left:26px;top:688px;width:1317px;height:1px;background:#e1e1e1;"></div>
<div class="r" style="left:0px;top:688px;width:25px;height:1px;background:#e1e1e1;"></div>
<div class="r" style="left:822px;top:219px;width:72px;height:19px;background:#e1e1e1;"></div>
<div class="r" style="left:822px;top:236px;width:73px;height:2px;background:#107c41;"></div>
<div class="r" style="left:0px;top:264px;width:25px;height:24px;background:#e1e1e1;"></div>
<div class="r" style="left:23.5px;top:264px;width:1.5px;height:24px;background:#107c41;"></div>
<div class="t" style="left:84.00px;top:222px;font-size:12px;line-height:15px;color:#333;">A</div>
<div class="t" style="left:241.00px;top:222px;font-size:12px;line-height:15px;color:#333;">B</div>
<div class="t" style="left:381.17px;top:222px;font-size:12px;line-height:15px;color:#333;">C</div>
<div class="t" style="left:459.17px;top:222px;font-size:12px;line-height:15px;color:#333;">D</div>
<div class="t" style="left:528.00px;top:222px;font-size:12px;line-height:15px;color:#333;">E</div>
<div class="t" style="left:596.83px;top:222px;font-size:12px;line-height:15px;color:#333;">F</div>
<div class="t" style="left:722.33px;top:222px;font-size:12px;line-height:15px;color:#333;">G</div>
<div class="t" style="left:853.67px;top:222px;font-size:12px;line-height:15px;color:#1d6b40;">H</div>
<div class="t" style="left:924.83px;top:222px;font-size:12px;line-height:15px;color:#333;">I</div>
<div class="t" style="left:987.50px;top:222px;font-size:12px;line-height:15px;color:#333;">J</div>
<div class="t" style="left:1050.50px;top:222px;font-size:12px;line-height:15px;color:#333;">K</div>
<div class="t" style="left:1115.16px;top:222px;font-size:12px;line-height:15px;color:#333;">L</div>
<div class="t" style="left:1177.50px;top:222px;font-size:12px;line-height:15px;color:#333;">M</div>
<div class="t" style="left:1242.17px;top:222px;font-size:12px;line-height:15px;color:#333;">N</div>
<div class="t" style="left:1305.83px;top:222px;font-size:12px;line-height:15px;color:#333;">O</div>
<div class="t" style="left:9.16px;top:248px;font-size:12px;line-height:15px;color:#333;">1</div>
<div class="t" style="left:9.16px;top:273px;font-size:12px;line-height:15px;color:#1d6b40;">2</div>
<div class="t" style="left:9.16px;top:298px;font-size:12px;line-height:15px;color:#333;">3</div>
<div class="t" style="left:9.16px;top:323px;font-size:12px;line-height:15px;color:#333;">4</div>
<div class="t" style="left:9.16px;top:348px;font-size:12px;line-height:15px;color:#333;">5</div>
<div class="t" style="left:9.16px;top:373px;font-size:12px;line-height:15px;color:#333;">6</div>
<div class="t" style="left:9.16px;top:398px;font-size:12px;line-height:15px;color:#333;">7</div>
<div class="t" style="left:9.16px;top:423px;font-size:12px;line-height:15px;color:#333;">8</div>
<div class="t" style="left:9.16px;top:448px;font-size:12px;line-height:15px;color:#333;">9</div>
<div class="t" style="left:5.83px;top:473px;font-size:12px;line-height:15px;color:#333;">10</div>
<div class="t" style="left:6.27px;top:498px;font-size:12px;line-height:15px;color:#333;">11</div>
<div class="t" style="left:5.83px;top:523px;font-size:12px;line-height:15px;color:#333;">12</div>
<div class="t" style="left:5.83px;top:548px;font-size:12px;line-height:15px;color:#333;">13</div>
<div class="t" style="left:5.83px;top:573px;font-size:12px;line-height:15px;color:#333;">14</div>
<div class="t" style="left:5.83px;top:598px;font-size:12px;line-height:15px;color:#333;">15</div>
<div class="t" style="left:5.83px;top:623px;font-size:12px;line-height:15px;color:#333;">16</div>
<div class="t" style="left:5.83px;top:648px;font-size:12px;line-height:15px;color:#333;">17</div>
<div class="t" style="left:5.83px;top:673px;font-size:12px;line-height:15px;color:#333;">18</div>
<div class="r" style="left:26px;top:239px;width:543px;height:25px;background:#00b050;"></div>
<div class="r" style="left:632px;top:239px;width:263px;height:25px;background:#00b050;"></div>
<div class="t" style="left:31.30px;top:241px;font-size:17.4px;line-height:22px;color:#fff;font-weight:bold;transform:scaleX(0.9612);transform-origin:0 0;">Serial Number</div>
<div class="t" style="left:194.65px;top:241px;font-size:17.4px;line-height:22px;color:#fff;font-weight:bold;transform:scaleX(0.9551);transform-origin:0 0;">Party Names</div>
<div class="t" style="left:350.00px;top:241px;font-size:17.4px;line-height:22px;color:#fff;font-weight:bold;transform:scaleX(0.9414);transform-origin:0 0;">Category</div>
<div class="t" style="left:436.50px;top:241px;font-size:17.4px;line-height:22px;color:#fff;font-weight:bold;transform:scaleX(0.9158);transform-origin:0 0;">Region</div>
<div class="t" style="left:500.35px;top:241px;font-size:17.4px;line-height:22px;color:#fff;font-weight:bold;transform:scaleX(0.9632);transform-origin:0 0;">Amount</div>
<div class="t" style="left:676.65px;top:241px;font-size:17.4px;line-height:22px;color:#fff;font-weight:bold;transform:scaleX(0.9551);transform-origin:0 0;">Party Names</div>
<div class="t" style="left:826.35px;top:241px;font-size:17.4px;line-height:22px;color:#fff;font-weight:bold;transform:scaleX(0.9632);transform-origin:0 0;">Amount</div>
<div class="t" style="left:83.16px;top:266px;font-size:17.4px;line-height:22px;color:#000;">1</div>
<div class="t" style="left:176.31px;top:266px;font-size:17.4px;line-height:22px;color:#000;">Vedanta Ventures</div>
<div class="t" style="left:350.69px;top:266px;font-size:17.4px;line-height:22px;color:#000;">Furniture</div>
<div class="t" style="left:446.09px;top:266px;font-size:17.4px;line-height:22px;color:#000;">East</div>
<div class="t" style="left:503.61px;top:266px;font-size:17.4px;line-height:22px;color:#000;">211065</div>
<div class="t" style="left:83.16px;top:291px;font-size:17.4px;line-height:22px;color:#000;">2</div>
<div class="t" style="left:184.56px;top:291px;font-size:17.4px;line-height:22px;color:#000;">Nihara Naturals</div>
<div class="t" style="left:354.55px;top:291px;font-size:17.4px;line-height:22px;color:#000;">Fashion</div>
<div class="t" style="left:442.23px;top:291px;font-size:17.4px;line-height:22px;color:#000;">North</div>
<div class="t" style="left:502.97px;top:291px;font-size:17.4px;line-height:22px;color:#000;">142909</div>
<div class="t" style="left:83.16px;top:316px;font-size:17.4px;line-height:22px;color:#000;">3</div>
<div class="t" style="left:170.04px;top:316px;font-size:17.4px;line-height:22px;color:#000;">TechSaar Solutions</div>
<div class="t" style="left:342.95px;top:316px;font-size:17.4px;line-height:22px;color:#000;">Electornics</div>
<div class="t" style="left:440.76px;top:316px;font-size:17.4px;line-height:22px;color:#000;">South</div>
<div class="t" style="left:502.97px;top:316px;font-size:17.4px;line-height:22px;color:#000;">176545</div>
<div class="t" style="left:83.16px;top:341px;font-size:17.4px;line-height:22px;color:#000;">4</div>
<div class="t" style="left:163.28px;top:341px;font-size:17.4px;line-height:22px;color:#000;">Aarambh Enterprises</div>
<div class="t" style="left:342.95px;top:341px;font-size:17.4px;line-height:22px;color:#000;">Electornics</div>
<div class="t" style="left:443.84px;top:341px;font-size:17.4px;line-height:22px;color:#000;">West</div>
<div class="t" style="left:502.97px;top:341px;font-size:17.4px;line-height:22px;color:#000;">404144</div>
<div class="t" style="left:83.16px;top:366px;font-size:17.4px;line-height:22px;color:#000;">5</div>
<div class="t" style="left:187.47px;top:366px;font-size:17.4px;line-height:22px;color:#000;">The Curry Cart</div>
<div class="t" style="left:350.69px;top:366px;font-size:17.4px;line-height:22px;color:#000;">Furniture</div>
<div class="t" style="left:443.84px;top:366px;font-size:17.4px;line-height:22px;color:#000;">West</div>
<div class="t" style="left:502.97px;top:366px;font-size:17.4px;line-height:22px;color:#000;">237870</div>
<div class="t" style="left:83.16px;top:391px;font-size:17.4px;line-height:22px;color:#000;">6</div>
<div class="t" style="left:181.18px;top:391px;font-size:17.4px;line-height:22px;color:#000;">Shristi Creations</div>
<div class="t" style="left:350.69px;top:391px;font-size:17.4px;line-height:22px;color:#000;">Furniture</div>
<div class="t" style="left:443.84px;top:391px;font-size:17.4px;line-height:22px;color:#000;">West</div>
<div class="t" style="left:502.97px;top:391px;font-size:17.4px;line-height:22px;color:#000;">193217</div>
<div class="t" style="left:83.16px;top:416px;font-size:17.4px;line-height:22px;color:#000;">7</div>
<div class="t" style="left:188.91px;top:416px;font-size:17.4px;line-height:22px;color:#000;">Yukti FinServe</div>
<div class="t" style="left:350.69px;top:416px;font-size:17.4px;line-height:22px;color:#000;">Furniture</div>
<div class="t" style="left:446.09px;top:416px;font-size:17.4px;line-height:22px;color:#000;">East</div>
<div class="t" style="left:502.97px;top:416px;font-size:17.4px;line-height:22px;color:#000;">505508</div>
<div class="t" style="left:83.16px;top:441px;font-size:17.4px;line-height:22px;color:#000;">8</div>
<div class="t" style="left:170.52px;top:441px;font-size:17.4px;line-height:22px;color:#000;">GrowLeaf Agrotech</div>
<div class="t" style="left:354.55px;top:441px;font-size:17.4px;line-height:22px;color:#000;">Fashion</div>
<div class="t" style="left:446.09px;top:441px;font-size:17.4px;line-height:22px;color:#000;">East</div>
<div class="t" style="left:502.97px;top:441px;font-size:17.4px;line-height:22px;color:#000;">493265</div>
<div class="t" style="left:83.16px;top:466px;font-size:17.4px;line-height:22px;color:#000;">9</div>
<div class="t" style="left:195.19px;top:466px;font-size:17.4px;line-height:22px;color:#000;">Sharat Bytes</div>
<div class="t" style="left:354.55px;top:466px;font-size:17.4px;line-height:22px;color:#000;">Fashion</div>
<div class="t" style="left:440.76px;top:466px;font-size:17.4px;line-height:22px;color:#000;">South</div>
<div class="t" style="left:502.97px;top:466px;font-size:17.4px;line-height:22px;color:#000;">404772</div>
<div class="t" style="left:78.32px;top:491px;font-size:17.4px;line-height:22px;color:#000;">10</div>
<div class="t" style="left:178.75px;top:491px;font-size:17.4px;line-height:22px;color:#000;">Naman IntraTech</div>
<div class="t" style="left:354.55px;top:491px;font-size:17.4px;line-height:22px;color:#000;">Fashion</div>
<div class="t" style="left:440.76px;top:491px;font-size:17.4px;line-height:22px;color:#000;">South</div>
<div class="t" style="left:502.97px;top:491px;font-size:17.4px;line-height:22px;color:#000;">165842</div>
<div class="t" style="left:78.97px;top:516px;font-size:17.4px;line-height:22px;color:#000;">11</div>
<div class="t" style="left:168.12px;top:516px;font-size:17.4px;line-height:22px;color:#000;">Chatori Gully Foods</div>
<div class="t" style="left:350.69px;top:516px;font-size:17.4px;line-height:22px;color:#000;">Furniture</div>
<div class="t" style="left:440.76px;top:516px;font-size:17.4px;line-height:22px;color:#000;">South</div>
<div class="t" style="left:502.97px;top:516px;font-size:17.4px;line-height:22px;color:#000;">492195</div>
<div class="t" style="left:78.32px;top:541px;font-size:17.4px;line-height:22px;color:#000;">12</div>
<div class="t" style="left:165.52px;top:541px;font-size:17.4px;line-height:22px;color:#000;">VastraVibe Fashions</div>
<div class="t" style="left:350.69px;top:541px;font-size:17.4px;line-height:22px;color:#000;">Furniture</div>
<div class="t" style="left:442.23px;top:541px;font-size:17.4px;line-height:22px;color:#000;">North</div>
<div class="t" style="left:502.97px;top:541px;font-size:17.4px;line-height:22px;color:#000;">296429</div>
<div class="t" style="left:78.32px;top:566px;font-size:17.4px;line-height:22px;color:#000;">13</div>
<div class="t" style="left:170.05px;top:566px;font-size:17.4px;line-height:22px;color:#000;">SkillSutra Academy</div>
<div class="t" style="left:354.55px;top:566px;font-size:17.4px;line-height:22px;color:#000;">Fashion</div>
<div class="t" style="left:442.23px;top:566px;font-size:17.4px;line-height:22px;color:#000;">North</div>
<div class="t" style="left:502.97px;top:566px;font-size:17.4px;line-height:22px;color:#000;">453216</div>
<div class="t" style="left:78.32px;top:591px;font-size:17.4px;line-height:22px;color:#000;">14</div>
<div class="t" style="left:160.38px;top:591px;font-size:17.4px;line-height:22px;color:#000;">UrbanMantra Interiors</div>
<div class="t" style="left:342.95px;top:591px;font-size:17.4px;line-height:22px;color:#000;">Electornics</div>
<div class="t" style="left:442.23px;top:591px;font-size:17.4px;line-height:22px;color:#000;">North</div>
<div class="t" style="left:502.97px;top:591px;font-size:17.4px;line-height:22px;color:#000;">474833</div>
<div class="t" style="left:78.32px;top:616px;font-size:17.4px;line-height:22px;color:#000;">15</div>
<div class="t" style="left:175.53px;top:616px;font-size:17.4px;line-height:22px;color:#000;">ZestZen Wellness</div>
<div class="t" style="left:342.95px;top:616px;font-size:17.4px;line-height:22px;color:#000;">Electornics</div>
<div class="t" style="left:442.23px;top:616px;font-size:17.4px;line-height:22px;color:#000;">North</div>
<div class="t" style="left:502.97px;top:616px;font-size:17.4px;line-height:22px;color:#000;">250660</div>
<div class="t" style="left:78.32px;top:641px;font-size:17.4px;line-height:22px;color:#000;">16</div>
<div class="t" style="left:162.32px;top:641px;font-size:17.4px;line-height:22px;color:#000;">Shakti Solar Systems</div>
<div class="t" style="left:342.95px;top:641px;font-size:17.4px;line-height:22px;color:#000;">Electornics</div>
<div class="t" style="left:442.23px;top:641px;font-size:17.4px;line-height:22px;color:#000;">North</div>
<div class="t" style="left:502.97px;top:641px;font-size:17.4px;line-height:22px;color:#000;">255945</div>
<div class="t" style="left:78.32px;top:666px;font-size:17.4px;line-height:22px;color:#000;">17</div>
<div class="t" style="left:171.98px;top:666px;font-size:17.4px;line-height:22px;color:#000;">Bianco Handicrafts</div>
<div class="t" style="left:354.55px;top:666px;font-size:17.4px;line-height:22px;color:#000;">Fashion</div>
<div class="t" style="left:440.76px;top:666px;font-size:17.4px;line-height:22px;color:#000;">South</div>
<div class="t" style="left:502.97px;top:666px;font-size:17.4px;line-height:22px;color:#000;">386379</div>
<div class="t" style="left:658.31px;top:266px;font-size:17.4px;line-height:22px;color:#000;">Vedanta Ventures</div>
<div class="t" style="left:645.28px;top:291px;font-size:17.4px;line-height:22px;color:#000;">Aarambh Enterprises</div>
<div class="t" style="left:652.52px;top:316px;font-size:17.4px;line-height:22px;color:#000;">GrowLeaf Agrotech</div>
<div class="t" style="left:660.75px;top:341px;font-size:17.4px;line-height:22px;color:#000;">Naman InfraTech</div>
<div class="t" style="left:642.38px;top:366px;font-size:17.4px;line-height:22px;color:#000;">UrbanMantra Interiors</div>
<div class="t" style="left:673.32px;top:391px;font-size:17.4px;line-height:22px;color:#000;">LokSeva Mart</div>
<div class="t" style="left:656.55px;top:416px;font-size:17.4px;line-height:22px;color:#000;">CodeRath IT Labs</div>
<svg class="s" style="left:10.5px;top:223.5px;" width="11" height="11" viewBox="0 0 11 11"><path d="M10.5 0 V10 H0 Z" fill="#dadada"/></svg>
<div class="r" style="left:0px;top:674px;width:1343px;height:8px;background:#fff;"></div>
<div class="r" style="left:0px;top:674px;width:116px;height:32px;background:#f0f0f0;border-top-right-radius:5px;"></div>
<div class="r" style="left:174px;top:674px;width:1192px;height:32px;background:#f0f0f0;border-top-left-radius:5px;"></div>
<div class="r" style="left:116px;top:680px;width:58px;height:26px;background:#f0f0f0;"></div>
<div class="r" style="left:0px;top:706px;width:1366px;height:22px;background:#f8f8f8;"></div>
<div class="r" style="left:0px;top:728px;width:1366px;height:40px;background:linear-gradient(90deg,#d5d2e4 0%,#d8d4e6 35%,#e0d6e6 60%,#e7d8e5 80%,#e8d9e4 100%);"></div>
<svg class="s" style="left:27px;top:684px;" width="9" height="12" viewBox="0 0 9 12"><path d="M7 1 L2 6 L7 11" fill="none" stroke="#b4b4b4" stroke-width="1.2"/></svg>
<svg class="s" style="left:59px;top:684px;" width="9" height="12" viewBox="0 0 9 12"><path d="M2 1 L7 6 L2 11" fill="none" stroke="#b4b4b4" stroke-width="1.2"/></svg>
<div class="r" style="left:116px;top:672px;width:58px;height:31px;background:#fff;border-radius:0 0 6px 6px;box-shadow:0 0.6px 1px rgba(0,0,0,0.18);"></div>
<div class="t" style="left:124.30px;top:681px;font-size:12.3px;line-height:15px;color:#1f1f1f;font-weight:bold;transform:scaleX(1.0239);transform-origin:0 0;">Sheet1</div>
<div class="r" style="left:124px;top:697px;width:42px;height:2px;background:#107c41;border-radius:1px;"></div>
<div class="r" style="left:177.5px;top:680px;width:1px;height:19px;background:#c8c8c8;"></div>
<svg class="s" style="left:218px;top:683px;" width="14" height="14" viewBox="0 0 14 14"><path d="M7 1 V13 M1 7 H13" stroke="#333" stroke-width="1.1"/></svg>
<div class="r" style="left:820.5px;top:685px;width:2px;height:2px;background:#9a9a9a;border-radius:1px;"></div>
<div class="r" style="left:820.5px;top:689px;width:2px;height:2px;background:#9a9a9a;border-radius:1px;"></div>
<div class="r" style="left:820.5px;top:693px;width:2px;height:2px;background:#9a9a9a;border-radius:1px;"></div>
<div class="r" style="left:838px;top:681px;width:509px;height:17px;background:#f7f7f7;border-radius:8px;"></div>
<svg class="s" style="left:842px;top:685px;" width="9" height="10" viewBox="0 0 9 10"><path d="M8 0.5 V9.5 L0.5 5 Z" fill="#6f6f6f"/></svg>
<div class="r" style="left:855px;top:685px;width:452px;height:9px;background:#707070;border-radius:4.5px;"></div>
<svg class="s" style="left:1335px;top:685px;" width="9" height="10" viewBox="0 0 9 10"><path d="M1 0.5 V9.5 L8.5 5 Z" fill="#6f6f6f"/></svg>
<div class="r" style="left:1343px;top:238px;width:1px;height:436px;background:#fff;"></div>
<div class="r" style="left:1344px;top:238px;width:1px;height:436px;background:#dcdcdc;"></div>
<div class="r" style="left:1345px;top:220px;width:21px;height:454px;background:#f0f0f0;"></div>
<div class="r" style="left:1346.5px;top:222px;width:18px;height:450px;background:#f8f8f8;border-radius:9px;"></div>
<svg class="s" style="left:1351px;top:224px;" width="10" height="8" viewBox="0 0 10 8"><path d="M0.5 7 H9.5 L5 0.5 Z" fill="#6f6f6f"/></svg>
<div class="r" style="left:1351px;top:236px;width:9px;height:335px;background:#707070;border-radius:4.5px;"></div>
<svg class="s" style="left:1351px;top:665px;" width="10" height="8" viewBox="0 0 10 8"><path d="M0.5 0.5 H9.5 L5 7 Z" fill="#6f6f6f"/></svg>
<div class="t" style="left:12.30px;top:710px;font-size:11.6px;line-height:14px;color:#333;transform:scaleX(0.9485);transform-origin:0 0;">Enter</div>
<svg class="s" style="left:60px;top:709px;" width="18" height="16" viewBox="0 0 18 16"><rect x="1.5" y="1.5" width="14" height="12" fill="none" stroke="#444" stroke-width="1.1"/><path d="M1.5 4.5 H15.5 M3.5 7 H7 M3.5 9.5 H6" stroke="#444" stroke-width="1"/>
<circle cx="12" cy="11" r="4" fill="#f8f8f8" stroke="#444" stroke-width="1.1"/><circle cx="12" cy="11" r="1.8" fill="#444"/></svg>
<svg class="s" style="left:92px;top:708px;" width="17" height="17" viewBox="0 0 17 17"><circle cx="8" cy="2.5" r="1.8" fill="none" stroke="#444" stroke-width="1.1"/><path d="M1.5 5.5 C5 7 11 7 14.5 5.5 M8 7 V10 L4 15.5 M8 10 L11 13" fill="none" stroke="#444" stroke-width="1.1"/>
<path d="M11 11.5 L15.5 16 M15.5 11.5 L11 16" stroke="#444" stroke-width="1.1"/></svg>
<div class="t" style="left:112.00px;top:710px;font-size:11.6px;line-height:14px;color:#333;font-weight:bold;transform:scaleX(0.9061);transform-origin:0 0;">Accessibility: Investigate</div>
<svg class="s" style="left:1078px;top:709px;" width="15" height="15" viewBox="0 0 15 15"><rect x="1.5" y="1.5" width="12" height="12" fill="none" stroke="#a8a8a8"/><path d="M1.5 5.5 H13.5 M1.5 9.5 H13.5 M5.5 1.5 V13.5 M9.5 1.5 V13.5" stroke="#a8a8a8"/></svg>
<svg class="s" style="left:1118px;top:709px;" width="15" height="15" viewBox="0 0 15 15"><rect x="1.5" y="1.5" width="12" height="12" fill="none" stroke="#a8a8a8"/><rect x="4.5" y="4.5" width="6" height="6" fill="none" stroke="#a8a8a8"/><path d="M5.5 6.5 H9.5 M5.5 8.5 H9.5" stroke="#a8a8a8"/></svg>
<svg class="s" style="left:1158px;top:709px;" width="16" height="15" viewBox="0 0 16 15"><rect x="1.5" y="1.5" width="13" height="12" fill="none" stroke="#a8a8a8"/><path d="M5.5 1.5 V8.5 H9.5 V1.5" fill="none" stroke="#a8a8a8"/></svg>
<div class="r" style="left:1192px;top:716px;width:8px;height:1px;background:#b0b0b0;"></div>
<div class="r" style="left:1205px;top:716px;width:100px;height:1px;background:#8a8a8a;"></div>
<div class="r" style="left:1254.5px;top:712px;width:1px;height:9px;background:#8a8a8a;"></div>
<svg class="s" style="left:1309px;top:712px;" width="10" height="10" viewBox="0 0 10 10"><path d="M5 0.5 V9.5 M0.5 5 H9.5" stroke="#b0b0b0" stroke-width="1"/></svg>
<div class="t" style="left:1331.70px;top:710px;font-size:11.6px;line-height:14px;color:#b0b0b0;transform:scaleX(0.8662);transform-origin:0 0;">100%</div>
<svg class="s" style="left:15px;top:740px;" width="17" height="17" viewBox="0 0 17 17"><path d="M0 2.3 L7 1.3 V7.7 H0Z M8 1.1 L17 0 V7.7 H8Z M0 8.7 H7 V15.2 L0 14.2Z M8 8.7 H17 V17 L8 15.8Z" fill="#111"/></svg>
<svg class="s" style="left:63px;top:738px;" width="18" height="19" viewBox="0 0 18 19"><circle cx="10.5" cy="7.5" r="6" fill="none" stroke="#111" stroke-width="1.4"/><path d="M6.3 11.8 L1 17.5" stroke="#111" stroke-width="1.6"/></svg>
<svg class="s" style="left:111px;top:739px;" width="18" height="16" viewBox="0 0 18 16"><rect x="1" y="3" width="11" height="9.5" fill="none" stroke="#111" stroke-width="1.3"/><path d="M1 0.7 H12 M1 15 H12 M15.5 0 V15.5" stroke="#111" stroke-width="1.3"/><rect x="14.5" y="5" width="2" height="3" fill="#111"/></svg>
<svg class="s" style="left:158px;top:735px;" width="26" height="26" viewBox="0 0 26 26"><defs><linearGradient id="eg" x1="0" y1="0" x2="1" y2="1"><stop offset="0" stop-color="#35c1f1"/><stop offset="0.5" stop-color="#1e88d8"/><stop offset="1" stop-color="#0c59a4"/></linearGradient>
<linearGradient id="eg2" x1="0" y1="0" x2="1" y2="0"><stop offset="0" stop-color="#3bd86f"/><stop offset="1" stop-color="#7ee0a0"/></linearGradient></defs>
<circle cx="13" cy="13" r="12" fill="url(#eg)"/><path d="M25 13 C25 7 20 4 15 4.5 C9 5 6 9 6.5 14 C8 10 12 9 15 10.5 C18 12 17 15 14 16 C18 18 23 17 25 13Z" fill="url(#eg2)"/>
<path d="M8 15 C8 20 13 23 18 21 C13 22 10 18 12 15 Z" fill="#e8f4fc" opacity="0.9"/></svg>
<svg class="s" style="left:208px;top:738px;" width="23" height="19" viewBox="0 0 23 19"><path d="M0.5 1.5 H8 L10 3.5 H22.5 V18.5 H0.5Z" fill="#f5c02a"/><rect x="0.5" y="5" width="22" height="13.5" fill="#ffd75a"/><path d="M6 12 H17 V18.5 H13.5 V15 H9.5 V18.5 H6Z" fill="#1f7fd4"/></svg>
<div class="r" style="left:257px;top:736px;width:24px;height:24px;background:#1d8ae6;border-radius:5px;"></div>
<svg class="s" style="left:257px;top:736px;" width="24" height="24" viewBox="0 0 24 24"><circle cx="13" cy="12" r="7.5" fill="none" stroke="#fff" stroke-width="1.3" stroke-dasharray="30 8"/><path d="M4 8 L9 12 L4 16Z" fill="#fff"/><text x="14" y="14" font-size="5" fill="#fff" text-anchor="middle" font-family="Liberation Sans" font-weight="bold">REC</text></svg>
<svg class="s" style="left:306px;top:736px;" width="24" height="24" viewBox="0 0 24 24"><circle cx="12" cy="12" r="11.5" fill="#db4437"/>
<path d="M12 12 L2 6.2 A11.5 11.5 0 0 0 12 23.5 Z" fill="#0f9d58"/><path d="M12 12 L12 23.5 A11.5 11.5 0 0 0 22 6.2 Z" fill="#ffcd40"/>
<path d="M12 12 L2 6.2 A11.5 11.5 0 0 1 22 6.2 Z" fill="#db4437"/>
<circle cx="12" cy="12" r="5.4" fill="#fff"/><circle cx="12" cy="12" r="4.3" fill="#4285f4"/></svg>
<svg class="s" style="left:355px;top:736px;" width="24" height="24" viewBox="0 0 24 24"><circle cx="12" cy="13" r="11" fill="#ff7139"/><path d="M3 9 C4 3 12 0 18 4 C22 7 23 12 21 16 C20 10 15 8 12 9Z" fill="#ffbd2e"/>
<circle cx="12.5" cy="13" r="6" fill="#7542e5"/><path d="M6 12 C7 17 13 19 17 15 C14 17 9 16 8 11Z" fill="#ff4f5e"/></svg>
<svg class="s" style="left:404px;top:736px;" width="24" height="24" viewBox="0 0 24 24"><circle cx="12" cy="12" r="11.5" fill="#db4437"/>
<path d="M12 12 L2 6.2 A11.5 11.5 0 0 0 12 23.5 Z" fill="#0f9d58"/><path d="M12 12 L12 23.5 A11.5 11.5 0 0 0 22 6.2 Z" fill="#ffcd40"/>
<path d="M12 12 L2 6.2 A11.5 11.5 0 0 1 22 6.2 Z" fill="#db4437"/>
<circle cx="12" cy="12" r="5.4" fill="#fff"/><circle cx="12" cy="12" r="4.3" fill="#4285f4"/><circle cx="18" cy="18" r="5.5" fill="#4fc3f7"/><path d="M14 17 H22 L20 21 H16Z" fill="#e0574f"/></svg>
<svg class="s" style="left:452px;top:736px;" width="26" height="24" viewBox="0 0 26 24"><ellipse cx="11" cy="14" rx="10" ry="8" fill="#d6e6f2" stroke="#9ab" stroke-width="0.8"/>
<circle cx="6" cy="12" r="1.8" fill="#e0574f"/><circle cx="9" cy="8.5" r="1.8" fill="#4caf50"/><circle cx="13" cy="8" r="1.8" fill="#fbc02d"/><circle cx="11" cy="15" r="1.6" fill="#fff" stroke="#9ab" stroke-width="0.6"/>
<path d="M12 23 L22 5" stroke="#d68a3a" stroke-width="2.5"/><path d="M21 6 L25 1 L23.5 7Z" fill="#e8a860"/></svg>
<div class="r" style="left:502px;top:736px;width:24px;height:24px;background:#e8202a;border-radius:4px;"></div>
<svg class="s" style="left:502px;top:736px;" width="24" height="24" viewBox="0 0 24 24"><path d="M4 7 L8.5 18 L12 11 L15.5 18 L20 7" fill="none" stroke="#fff" stroke-width="2.4" stroke-linejoin="miter"/><path d="M4 7 H20" stroke="#fff" stroke-width="0"/></svg>
<div class="r" style="left:539px;top:728px;width:48px;height:40px;background:rgba(255,255,255,0.55);"></div>
<div class="r" style="left:539px;top:766px;width:48px;height:2px;background:#1565c0;"></div>
<svg class="s" style="left:551px;top:737px;" width="22" height="22" viewBox="0 0 22 22"><rect x="5" y="0" width="17" height="22" rx="2" fill="#21a366"/><rect x="5" y="0" width="9" height="8" fill="#33c481"/><rect x="13.5" y="0" width="8.5" height="8" rx="1" fill="#8ee07a"/>
<rect x="13.5" y="8" width="8.5" height="14" fill="#107c41"/><rect x="0" y="7" width="13" height="12" rx="2" fill="#185c37"/>
<text x="6.5" y="16.5" font-size="10" font-weight="bold" fill="#fff" text-anchor="middle" font-family="Liberation Sans">x</text></svg>
<div class="t" style="left:961.60px;top:735px;font-size:11.3px;line-height:14px;color:#fbfbfb;transform:scaleX(1.0313);transform-origin:0 0;">0.00 Mbit/s</div>
<div class="t" style="left:961.60px;top:747px;font-size:11.3px;line-height:14px;color:#fbfbfb;transform:scaleX(1.0313);transform-origin:0 0;">0.00 Mbit/s</div>
<svg class="s" style="left:1026px;top:744px;" width="14" height="8" viewBox="0 0 14 8"><path d="M1 7 L7 1 L13 7" fill="none" stroke="#111" stroke-width="1.3"/></svg>
<div class="r" style="left:1049px;top:740px;width:16px;height:16px;background:#fff;border-radius:2px;"></div>
<svg class="s" style="left:1049px;top:740px;" width="16" height="16" viewBox="0 0 16 16"><path d="M4 12 H12 C14 12 15 10.5 14.5 9 C14 7.5 12.5 7 11.5 7.5 C11 5 9 4 7 4.5 C5 5 4 7 4.5 8.5 C2.5 8.5 1.5 10 2 11 C2.5 12 3 12 4 12Z" fill="none" stroke="#2a7de1" stroke-width="1.3"/></svg>
<svg class="s" style="left:1073px;top:740px;" width="16" height="16" viewBox="0 0 16 16"><rect x="0.5" y="0.5" width="15" height="15" fill="#fff" stroke="#2e7d32"/><rect x="2" y="2" width="12" height="12" fill="#e02020"/><path d="M8 4 L12 12 H4Z" fill="#fff"/><path d="M8 7 L10 11 H6Z" fill="#e02020"/></svg>
<svg class="s" style="left:1097px;top:740px;" width="16" height="16" viewBox="0 0 16 16"><circle cx="8" cy="8" r="7.5" fill="#f5d020"/><circle cx="8" cy="8" r="5.5" fill="#3a9a3a"/><path d="M8 4.5 V11.5 M4.5 8 H11.5" stroke="#f5e060" stroke-width="2"/></svg>
<svg class="s" style="left:1121px;top:740px;" width="16" height="16" viewBox="0 0 16 16"><path d="M1 15 C4 9 9 3 15 1 C14 6 10 12 3 14Z" fill="#9b72d8"/><path d="M1 15 L10 6" stroke="#c7a8f0" stroke-width="0.8"/></svg>
<svg class="s" style="left:1147px;top:741px;" width="15" height="15" viewBox="0 0 15 15"><path d="M1.5 8 A10 10 0 0 1 11 3.5 M3.5 10.5 A7 7 0 0 1 10 6.5 M5.5 12.8 A4 4 0 0 1 9.5 10" fill="none" stroke="#111" stroke-width="1.3"/><circle cx="12" cy="13" r="1.5" fill="#111"/></svg>
<svg class="s" style="left:1168px;top:740px;" width="18" height="17" viewBox="0 0 18 17"><path d="M1.5 6 H4.5 L9 2 V15 L4.5 11 H1.5Z" fill="none" stroke="#111" stroke-width="1.2"/><path d="M11.5 5.5 C13 7 13 10 11.5 11.5 M13.5 3.5 C16 6 16 11 13.5 13.5" fill="none" stroke="#111" stroke-width="1.2"/></svg>
<svg class="s" style="left:1193px;top:743px;" width="17" height="11" viewBox="0 0 17 11"><rect x="0.7" y="0.7" width="13.5" height="9.5" fill="none" stroke="#111" stroke-width="1.2"/><rect x="2.5" y="2.5" width="5" height="6" fill="#111"/><rect x="14.5" y="3.5" width="2" height="4" fill="#111"/></svg>
<div class="t" style="left:1219.50px;top:741px;font-size:11.6px;line-height:14px;color:#111;transform:scaleX(0.8712);transform-origin:0 0;">ENG</div>
<div class="t" style="left:1260.00px;top:732px;font-size:11.6px;line-height:14px;color:#111;transform:scaleX(0.9653);transform-origin:0 0;">8:16 PM</div>
<div class="t" style="left:1252.40px;top:750px;font-size:11.6px;line-height:14px;color:#111;transform:scaleX(0.9801);transform-origin:0 0;">10/27/2025</div>
<svg class="s" style="left:1324px;top:740px;" width="18" height="17" viewBox="0 0 18 17"><path d="M0.7 0.7 H16.3 V12 H8 L4 15.5 V12 H0.7Z" fill="#111"/><path d="M3.5 4 H13.5 M3.5 6.5 H13.5 M3.5 9 H10" stroke="#f0e8f0" stroke-width="1.1"/><circle cx="14" cy="13" r="3" fill="#e6d8e4"/><path d="M12.5 13 A1.5 1.5 0 1 1 15.5 13" fill="none" stroke="#111" stroke-width="0.9"/></svg>
<div class="r" style="left:756px;top:264px;width:141px;height:24px;background:#fff;"></div>
<div class="t" style="left:757.60px;top:266px;font-size:17.4px;line-height:22px;color:#000;transform:scaleX(0.9072);transform-origin:0 0;">=VLOOKUP(</div>
<div class="r" style="left:850.2px;top:265px;width:1.2px;height:23px;background:#000;"></div>
<div class="r" style="left:820px;top:262px;width:76px;height:2px;background:#107c41;"></div>
<div class="r" style="left:820px;top:288px;width:71px;height:2px;background:#107c41;"></div>
<div class="r" style="left:892px;top:288px;width:5px;height:4px;background:#107c41;"></div>
<div class="r" style="left:766px;top:291px;width:383px;height:18px;background:#fff;border:1px solid #a6a6a6;box-sizing:border-box;box-shadow:1px 1px 1px rgba(0,0,0,0.12);"></div>
<div class="t" style="left:773.50px;top:291px;font-size:11.2px;line-height:14px;color:#737373;transform:scaleX(0.9761);transform-origin:0 0;">VLOOKUP(</div>
<div class="t" style="left:830.00px;top:291px;font-size:11.2px;line-height:14px;color:#4a4a4a;font-weight:bold;transform:scaleX(1.0059);transform-origin:0 0;">lookup_value</div>
<div class="t" style="left:902.00px;top:291px;font-size:11.2px;line-height:14px;color:#555;transform:scaleX(1.0544);transform-origin:0 0;">, table_array, col_index_num, [range_lookup])</div>
<svg class="s" style="left:815px;top:285px;" width="70" height="200" viewBox="0 0 70 200"><path d="M35.6 14.5 L10.5 100.3 H22.3 V194.3 H47.7 V100.3 H60.5 Z" fill="none" stroke="#e8141c" stroke-width="4.6" stroke-linejoin="miter" stroke-miterlimit="10"/></svg>
<svg class="s" style="left:770px;top:520px;" width="460" height="100" viewBox="0 0 460 100">
<rect x="12" y="12.6" width="436" height="76" rx="38" fill="none" stroke="#7a4a3a" stroke-width="3.6"/>
<rect x="9.8" y="9.8" width="440.4" height="76.4" rx="38.2" fill="none" stroke="#f8a47f" stroke-width="3.4"/>
</svg>
<svg class="s" style="left:800px;top:540px;" width="70" height="60" viewBox="0 0 70 60">
<circle cx="17.5" cy="14" r="7.5" fill="none" stroke="#9b5a45" stroke-width="1.3"/><path d="M14 9 C11 12 12 17 15 19 M13 13 H20" fill="none" stroke="#9b5a45" stroke-width="1"/>
<path d="M14.3 24.3 H22.7 L18.8 51.6 H10 Z" fill="#6e4535"/>
<path d="M31 14 H56 L55 21.4 H31.5 Z" fill="#a96a52"/>
<path d="M36 30 H45 L42.5 51.6 H32 Z" fill="#a96a52"/>
<path d="M24 16.5 C45 20 66 34 66 46 C66 52 58 53 49 52.5 C55 50 58 47 56 41 C52 31 38 25 23.5 24 Z" fill="#6e4535"/>
</svg>
<svg class="s" style="left:870px;top:535px;" width="310" height="70" viewBox="0 0 310 70">
<g fill="#ffa37f" stroke="none">
<rect x="8.8" y="25.8" width="143.5" height="3.2"/>
<rect x="167.6" y="25.7" width="135.3" height="3.3"/>
<path d="M37 27 H43.3 V59.5 L37 57.5Z"/>
<path d="M50.4 21 L56.8 24 V59.5 L50.4 57.5Z"/>
<path d="M63.8 22 H69.7 V59.5 L63.8 57.5Z"/>
<path d="M94.8 27 H101.9 V59.5 L94.8 57.5Z"/>
<path d="M75 50.4 L101 28 V59.5 Z M85.5 51.5 L94.5 42 V55 Z" fill-rule="evenodd"/>
<path d="M123 45 L149 27 V59.5 Z M132 45.5 L142.3 40 V53.5 Z" fill-rule="evenodd"/>
<path d="M142.3 27 H149.3 V59.5 L142.3 57.5Z"/>
<path d="M207.4 25.7 H213.8 V59 L207.4 57Z"/>
<path d="M220.3 21.3 L226.7 24 V59.4 L220.3 57.4Z"/>
<path d="M264.2 20 H270.6 V59.4 L264.2 57.4Z"/>
<path d="M277.6 29 H284.7 V56.5 L277.6 55Z"/>
</g>
<g fill="none" stroke="#ffa37f" stroke-linecap="round">
<path d="M21.5 17.5 C16.5 22 17 30 20.5 37.5 C24 45 23 52 13 56" stroke-width="5.5"/>
<path d="M22 50 C25 43 28.5 38 31.5 37.5 C34.5 37.5 36 39 37.5 42" stroke-width="4.5"/>
<path d="M66.5 27 C62 15 74 9.5 85 10.5 C92 11 97 14 100 18.5" stroke-width="4.5"/>
<path d="M102 33.5 C111 36 117 41 116.5 47 C116 52 110 54 107 51 C104.5 48.5 106 45 109 43.5" stroke-width="5"/>
<path d="M164.5 43 C170 50 177 55 186 55 C197 55 203 48 202 38 C201 33 198 29 196 27" stroke-width="5.5"/>
<path d="M182.5 29 V41 L190 42.5 L192 37" stroke-width="4.5" stroke-linejoin="round"/>
<path d="M228 19 C236 13 250 12 257 20 C262 27 260 37 252 43 C246 48 244 55 250 59.5 C254 62 259 63 264 63" stroke-width="5.5"/>
<path d="M238 28 V41 L247 42.5 L249 36.5" stroke-width="4.5" stroke-linejoin="round"/>
<path d="M266.5 24 C264 15 275 9.5 285 10 C293 10.5 299 13 302 18.5 L302.5 26" stroke-width="4.5"/>
<path d="M288.5 40 C288 35 292 33.5 300 34 C302.5 44 296 52 283 56.5" stroke-width="5.5"/>
</g></svg>
</body></html>
